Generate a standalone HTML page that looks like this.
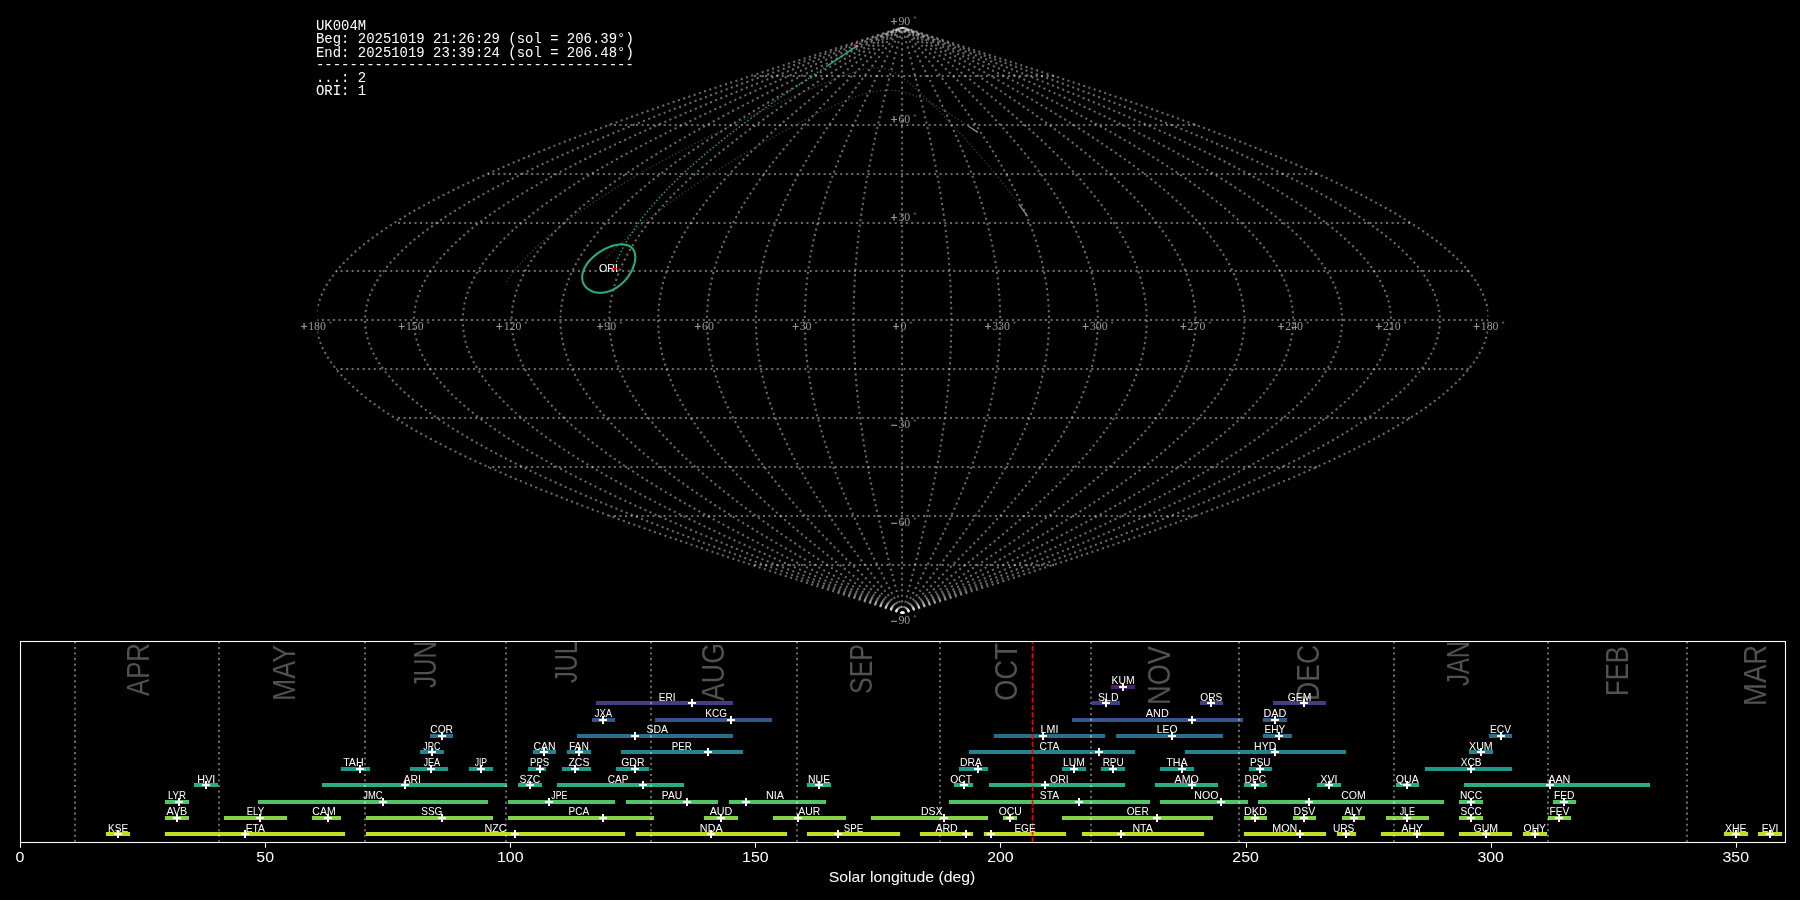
<!DOCTYPE html>
<html lang="en">
<head>
<meta charset="utf-8">
<title>UK004M meteor radiant map</title>
<style>
html,body{margin:0;padding:0;background:#000;}
body{width:1800px;height:900px;overflow:hidden;}
svg{display:block;}
text{font-family:"Liberation Sans",sans-serif;}
.sl{font-family:"Liberation Serif",serif;font-size:11.8px;fill:#999999;}
.pl{stroke:#999;stroke-width:0.45px;}
.ori{font-size:11.3px;fill:#fff;}
.mono{font-family:"Liberation Mono",monospace;font-size:13.89px;fill:#fff;}
.mon{font-size:31px;fill:#525252;}
.lb{font-size:10.2px;fill:#fff;text-anchor:middle;}
.tk{font-size:14.1px;fill:#fff;text-anchor:middle;}
</style>
</head>
<body>
<svg width="1800" height="900" viewBox="0 0 1800 900">
<rect width="1800" height="900" fill="#000"/>
<defs><clipPath id="skyclip"><rect x="317.4" y="27.25" width="1170.9" height="586.3"/></clipPath></defs>
<g opacity="0.999">
<g id="sky" clip-path="url(#skyclip)">
<g fill="none" stroke="#fff" stroke-opacity="0.415" stroke-width="2.08" stroke-dasharray="2.08 3.44">
<path d="M902.45 613.43 L912.68 610.17 L922.91 606.92 L933.13 603.66 L943.35 600.4 L953.55 597.14 L963.73 593.89 L973.9 590.63 L984.04 587.37 L994.16 584.12 L1004.25 580.86 L1014.31 577.6 L1024.34 574.35 L1034.33 571.09 L1044.28 567.83 L1054.19 564.58 L1064.05 561.32 L1073.86 558.06 L1083.61 554.8 L1093.32 551.55 L1102.96 548.29 L1112.55 545.03 L1122.07 541.78 L1131.52 538.52 L1140.9 535.26 L1150.21 532 L1159.45 528.75 L1168.61 525.49 L1177.68 522.23 L1186.67 518.98 L1195.58 515.72 L1204.4 512.46 L1213.12 509.21 L1221.75 505.95 L1230.28 502.69 L1238.71 499.44 L1247.04 496.18 L1255.27 492.92 L1263.39 489.66 L1271.4 486.41 L1279.29 483.15 L1287.07 479.89 L1294.73 476.64 L1302.28 473.38 L1309.7 470.12 L1317 466.87 L1324.17 463.61 L1331.21 460.35 L1338.13 457.09 L1344.91 453.84 L1351.55 450.58 L1358.06 447.32 L1364.43 444.07 L1370.66 440.81 L1376.74 437.55 L1382.69 434.3 L1388.48 431.04 L1394.13 427.78 L1399.63 424.52 L1404.97 421.27 L1410.17 418.01 L1415.2 414.75 L1420.09 411.5 L1424.81 408.24 L1429.38 404.98 L1433.78 401.73 L1438.03 398.47 L1442.11 395.21 L1446.02 391.95 L1449.77 388.7 L1453.35 385.44 L1456.77 382.18 L1460.02 378.93 L1463.09 375.67 L1466 372.41 L1468.73 369.16 L1471.3 365.9 L1473.68 362.64 L1475.9 359.38 L1477.94 356.13 L1479.8 352.87 L1481.49 349.61 L1483 346.36 L1484.34 343.1 L1485.5 339.84 L1486.48 336.59 L1487.28 333.33 L1487.91 330.07 L1488.35 326.81 L1488.62 323.56 L1488.71 320.3 L1488.62 317.04 L1488.35 313.79 L1487.91 310.53 L1487.28 307.27 L1486.48 304.01 L1485.5 300.76 L1484.34 297.5 L1483 294.24 L1481.49 290.99 L1479.8 287.73 L1477.94 284.47 L1475.9 281.22 L1473.68 277.96 L1471.3 274.7 L1468.73 271.44 L1466 268.19 L1463.09 264.93 L1460.02 261.67 L1456.77 258.42 L1453.35 255.16 L1449.77 251.9 L1446.02 248.65 L1442.11 245.39 L1438.03 242.13 L1433.78 238.88 L1429.38 235.62 L1424.81 232.36 L1420.09 229.1 L1415.2 225.85 L1410.17 222.59 L1404.97 219.33 L1399.63 216.08 L1394.13 212.82 L1388.48 209.56 L1382.69 206.31 L1376.74 203.05 L1370.66 199.79 L1364.43 196.53 L1358.06 193.28 L1351.55 190.02 L1344.91 186.76 L1338.13 183.51 L1331.21 180.25 L1324.17 176.99 L1317 173.74 L1309.7 170.48 L1302.28 167.22 L1294.73 163.96 L1287.07 160.71 L1279.29 157.45 L1271.4 154.19 L1263.39 150.94 L1255.27 147.68 L1247.04 144.42 L1238.71 141.16 L1230.28 137.91 L1221.75 134.65 L1213.12 131.39 L1204.4 128.14 L1195.58 124.88 L1186.67 121.62 L1177.68 118.37 L1168.61 115.11 L1159.45 111.85 L1150.21 108.59 L1140.9 105.34 L1131.52 102.08 L1122.07 98.82 L1112.55 95.57 L1102.96 92.31 L1093.32 89.05 L1083.61 85.8 L1073.86 82.54 L1064.05 79.28 L1054.19 76.03 L1044.28 72.77 L1034.33 69.51 L1024.34 66.25 L1014.31 63 L1004.25 59.74 L994.16 56.48 L984.04 53.23 L973.9 49.97 L963.73 46.71 L953.55 43.45 L943.35 40.2 L933.13 36.94 L922.91 33.68 L912.68 30.43 L902.45 27.17"/>
<path d="M902.45 613.43 L911.83 610.17 L921.21 606.92 L930.58 603.66 L939.94 600.4 L949.29 597.14 L958.62 593.89 L967.94 590.63 L977.24 587.37 L986.52 584.12 L995.77 580.86 L1004.99 577.6 L1014.18 574.35 L1023.34 571.09 L1032.46 567.83 L1041.54 564.58 L1050.58 561.32 L1059.57 558.06 L1068.52 554.8 L1077.41 551.55 L1086.25 548.29 L1095.04 545.03 L1103.77 541.78 L1112.43 538.52 L1121.03 535.26 L1129.57 532 L1138.03 528.75 L1146.43 525.49 L1154.75 522.23 L1162.99 518.98 L1171.15 515.72 L1179.23 512.46 L1187.23 509.21 L1195.14 505.95 L1202.96 502.69 L1210.69 499.44 L1218.33 496.18 L1225.87 492.92 L1233.31 489.66 L1240.65 486.41 L1247.89 483.15 L1255.02 479.89 L1262.04 476.64 L1268.96 473.38 L1275.76 470.12 L1282.45 466.87 L1289.03 463.61 L1295.48 460.35 L1301.82 457.09 L1308.03 453.84 L1314.13 450.58 L1320.09 447.32 L1325.93 444.07 L1331.64 440.81 L1337.22 437.55 L1342.67 434.3 L1347.98 431.04 L1353.16 427.78 L1358.2 424.52 L1363.1 421.27 L1367.86 418.01 L1372.48 414.75 L1376.95 411.5 L1381.28 408.24 L1385.47 404.98 L1389.5 401.73 L1393.39 398.47 L1397.13 395.21 L1400.72 391.95 L1404.16 388.7 L1407.45 385.44 L1410.58 382.18 L1413.55 378.93 L1416.37 375.67 L1419.04 372.41 L1421.54 369.16 L1423.89 365.9 L1426.08 362.64 L1428.11 359.38 L1429.98 356.13 L1431.69 352.87 L1433.24 349.61 L1434.63 346.36 L1435.85 343.1 L1436.91 339.84 L1437.81 336.59 L1438.55 333.33 L1439.12 330.07 L1439.53 326.81 L1439.77 323.56 L1439.86 320.3 L1439.77 317.04 L1439.53 313.79 L1439.12 310.53 L1438.55 307.27 L1437.81 304.01 L1436.91 300.76 L1435.85 297.5 L1434.63 294.24 L1433.24 290.99 L1431.69 287.73 L1429.98 284.47 L1428.11 281.22 L1426.08 277.96 L1423.89 274.7 L1421.54 271.44 L1419.04 268.19 L1416.37 264.93 L1413.55 261.67 L1410.58 258.42 L1407.45 255.16 L1404.16 251.9 L1400.72 248.65 L1397.13 245.39 L1393.39 242.13 L1389.5 238.88 L1385.47 235.62 L1381.28 232.36 L1376.95 229.1 L1372.48 225.85 L1367.86 222.59 L1363.1 219.33 L1358.2 216.08 L1353.16 212.82 L1347.98 209.56 L1342.67 206.31 L1337.22 203.05 L1331.64 199.79 L1325.93 196.53 L1320.09 193.28 L1314.13 190.02 L1308.03 186.76 L1301.82 183.51 L1295.48 180.25 L1289.03 176.99 L1282.45 173.74 L1275.76 170.48 L1268.96 167.22 L1262.04 163.96 L1255.02 160.71 L1247.89 157.45 L1240.65 154.19 L1233.31 150.94 L1225.87 147.68 L1218.33 144.42 L1210.69 141.16 L1202.96 137.91 L1195.14 134.65 L1187.23 131.39 L1179.23 128.14 L1171.15 124.88 L1162.99 121.62 L1154.75 118.37 L1146.43 115.11 L1138.03 111.85 L1129.57 108.59 L1121.03 105.34 L1112.43 102.08 L1103.77 98.82 L1095.04 95.57 L1086.25 92.31 L1077.41 89.05 L1068.52 85.8 L1059.57 82.54 L1050.58 79.28 L1041.54 76.03 L1032.46 72.77 L1023.34 69.51 L1014.18 66.25 L1004.99 63 L995.77 59.74 L986.52 56.48 L977.24 53.23 L967.94 49.97 L958.62 46.71 L949.29 43.45 L939.94 40.2 L930.58 36.94 L921.21 33.68 L911.83 30.43 L902.45 27.17"/>
<path d="M902.45 613.43 L910.98 610.17 L919.5 606.92 L928.02 603.66 L936.53 600.4 L945.03 597.14 L953.52 593.89 L961.99 590.63 L970.44 587.37 L978.88 584.12 L987.29 580.86 L995.67 577.6 L1004.03 574.35 L1012.35 571.09 L1020.64 567.83 L1028.9 564.58 L1037.11 561.32 L1045.29 558.06 L1053.42 554.8 L1061.51 551.55 L1069.54 548.29 L1077.53 545.03 L1085.46 541.78 L1093.34 538.52 L1101.16 535.26 L1108.92 532 L1116.62 528.75 L1124.25 525.49 L1131.81 522.23 L1139.3 518.98 L1146.73 515.72 L1154.07 512.46 L1161.34 509.21 L1168.53 505.95 L1175.64 502.69 L1182.67 499.44 L1189.61 496.18 L1196.47 492.92 L1203.23 489.66 L1209.9 486.41 L1216.48 483.15 L1222.97 479.89 L1229.35 476.64 L1235.64 473.38 L1241.83 470.12 L1247.91 466.87 L1253.88 463.61 L1259.75 460.35 L1265.51 457.09 L1271.16 453.84 L1276.7 450.58 L1282.12 447.32 L1287.43 444.07 L1292.62 440.81 L1297.7 437.55 L1302.65 434.3 L1307.48 431.04 L1312.18 427.78 L1316.76 424.52 L1321.22 421.27 L1325.55 418.01 L1329.75 414.75 L1333.81 411.5 L1337.75 408.24 L1341.56 404.98 L1345.23 401.73 L1348.76 398.47 L1352.16 395.21 L1355.43 391.95 L1358.55 388.7 L1361.54 385.44 L1364.38 382.18 L1367.09 378.93 L1369.65 375.67 L1372.07 372.41 L1374.35 369.16 L1376.49 365.9 L1378.48 362.64 L1380.32 359.38 L1382.02 356.13 L1383.58 352.87 L1384.99 349.61 L1386.25 346.36 L1387.36 343.1 L1388.32 339.84 L1389.14 336.59 L1389.81 333.33 L1390.33 330.07 L1390.7 326.81 L1390.93 323.56 L1391 320.3 L1390.93 317.04 L1390.7 313.79 L1390.33 310.53 L1389.81 307.27 L1389.14 304.01 L1388.32 300.76 L1387.36 297.5 L1386.25 294.24 L1384.99 290.99 L1383.58 287.73 L1382.02 284.47 L1380.32 281.22 L1378.48 277.96 L1376.49 274.7 L1374.35 271.44 L1372.07 268.19 L1369.65 264.93 L1367.09 261.67 L1364.38 258.42 L1361.54 255.16 L1358.55 251.9 L1355.43 248.65 L1352.16 245.39 L1348.76 242.13 L1345.23 238.88 L1341.56 235.62 L1337.75 232.36 L1333.81 229.1 L1329.75 225.85 L1325.55 222.59 L1321.22 219.33 L1316.76 216.08 L1312.18 212.82 L1307.48 209.56 L1302.65 206.31 L1297.7 203.05 L1292.62 199.79 L1287.43 196.53 L1282.12 193.28 L1276.7 190.02 L1271.16 186.76 L1265.51 183.51 L1259.75 180.25 L1253.88 176.99 L1247.91 173.74 L1241.83 170.48 L1235.64 167.22 L1229.35 163.96 L1222.97 160.71 L1216.48 157.45 L1209.9 154.19 L1203.23 150.94 L1196.47 147.68 L1189.61 144.42 L1182.67 141.16 L1175.64 137.91 L1168.53 134.65 L1161.34 131.39 L1154.07 128.14 L1146.73 124.88 L1139.3 121.62 L1131.81 118.37 L1124.25 115.11 L1116.62 111.85 L1108.92 108.59 L1101.16 105.34 L1093.34 102.08 L1085.46 98.82 L1077.53 95.57 L1069.54 92.31 L1061.51 89.05 L1053.42 85.8 L1045.29 82.54 L1037.11 79.28 L1028.9 76.03 L1020.64 72.77 L1012.35 69.51 L1004.03 66.25 L995.67 63 L987.29 59.74 L978.88 56.48 L970.44 53.23 L961.99 49.97 L953.52 46.71 L945.03 43.45 L936.53 40.2 L928.02 36.94 L919.5 33.68 L910.98 30.43 L902.45 27.17"/>
<path d="M902.45 613.43 L910.12 610.17 L917.8 606.92 L925.46 603.66 L933.12 600.4 L940.77 597.14 L948.41 593.89 L956.04 590.63 L963.64 587.37 L971.23 584.12 L978.8 580.86 L986.35 577.6 L993.87 574.35 L1001.36 571.09 L1008.82 567.83 L1016.25 564.58 L1023.65 561.32 L1031 558.06 L1038.32 554.8 L1045.6 551.55 L1052.83 548.29 L1060.02 545.03 L1067.16 541.78 L1074.25 538.52 L1081.29 535.26 L1088.27 532 L1095.2 528.75 L1102.07 525.49 L1108.87 522.23 L1115.62 518.98 L1122.3 515.72 L1128.91 512.46 L1135.45 509.21 L1141.93 505.95 L1148.32 502.69 L1154.65 499.44 L1160.9 496.18 L1167.07 492.92 L1173.15 489.66 L1179.16 486.41 L1185.08 483.15 L1190.92 479.89 L1196.66 476.64 L1202.32 473.38 L1207.89 470.12 L1213.36 466.87 L1218.74 463.61 L1224.02 460.35 L1229.21 457.09 L1234.29 453.84 L1239.28 450.58 L1244.16 447.32 L1248.93 444.07 L1253.61 440.81 L1258.17 437.55 L1262.63 434.3 L1266.97 431.04 L1271.21 427.78 L1275.33 424.52 L1279.34 421.27 L1283.24 418.01 L1287.02 414.75 L1290.68 411.5 L1294.22 408.24 L1297.65 404.98 L1300.95 401.73 L1304.13 398.47 L1307.19 395.21 L1310.13 391.95 L1312.94 388.7 L1315.63 385.44 L1318.19 382.18 L1320.62 378.93 L1322.93 375.67 L1325.11 372.41 L1327.16 369.16 L1329.08 365.9 L1330.88 362.64 L1332.54 359.38 L1334.07 356.13 L1335.47 352.87 L1336.73 349.61 L1337.87 346.36 L1338.87 343.1 L1339.74 339.84 L1340.47 336.59 L1341.07 333.33 L1341.54 330.07 L1341.88 326.81 L1342.08 323.56 L1342.14 320.3 L1342.08 317.04 L1341.88 313.79 L1341.54 310.53 L1341.07 307.27 L1340.47 304.01 L1339.74 300.76 L1338.87 297.5 L1337.87 294.24 L1336.73 290.99 L1335.47 287.73 L1334.07 284.47 L1332.54 281.22 L1330.88 277.96 L1329.08 274.7 L1327.16 271.44 L1325.11 268.19 L1322.93 264.93 L1320.62 261.67 L1318.19 258.42 L1315.63 255.16 L1312.94 251.9 L1310.13 248.65 L1307.19 245.39 L1304.13 242.13 L1300.95 238.88 L1297.65 235.62 L1294.22 232.36 L1290.68 229.1 L1287.02 225.85 L1283.24 222.59 L1279.34 219.33 L1275.33 216.08 L1271.21 212.82 L1266.97 209.56 L1262.63 206.31 L1258.17 203.05 L1253.61 199.79 L1248.93 196.53 L1244.16 193.28 L1239.28 190.02 L1234.29 186.76 L1229.21 183.51 L1224.02 180.25 L1218.74 176.99 L1213.36 173.74 L1207.89 170.48 L1202.32 167.22 L1196.66 163.96 L1190.92 160.71 L1185.08 157.45 L1179.16 154.19 L1173.15 150.94 L1167.07 147.68 L1160.9 144.42 L1154.65 141.16 L1148.32 137.91 L1141.93 134.65 L1135.45 131.39 L1128.91 128.14 L1122.3 124.88 L1115.62 121.62 L1108.87 118.37 L1102.07 115.11 L1095.2 111.85 L1088.27 108.59 L1081.29 105.34 L1074.25 102.08 L1067.16 98.82 L1060.02 95.57 L1052.83 92.31 L1045.6 89.05 L1038.32 85.8 L1031 82.54 L1023.65 79.28 L1016.25 76.03 L1008.82 72.77 L1001.36 69.51 L993.87 66.25 L986.35 63 L978.8 59.74 L971.23 56.48 L963.64 53.23 L956.04 49.97 L948.41 46.71 L940.77 43.45 L933.12 40.2 L925.46 36.94 L917.8 33.68 L910.12 30.43 L902.45 27.17"/>
<path d="M902.45 613.43 L909.27 610.17 L916.09 606.92 L922.9 603.66 L929.71 600.4 L936.51 597.14 L943.3 593.89 L950.08 590.63 L956.84 587.37 L963.59 584.12 L970.32 580.86 L977.03 577.6 L983.71 574.35 L990.37 571.09 L997 567.83 L1003.61 564.58 L1010.18 561.32 L1016.72 558.06 L1023.23 554.8 L1029.7 551.55 L1036.13 548.29 L1042.51 545.03 L1048.86 541.78 L1055.16 538.52 L1061.42 535.26 L1067.63 532 L1073.78 528.75 L1079.89 525.49 L1085.94 522.23 L1091.93 518.98 L1097.87 515.72 L1103.75 512.46 L1109.56 509.21 L1115.32 505.95 L1121 502.69 L1126.63 499.44 L1132.18 496.18 L1137.66 492.92 L1143.08 489.66 L1148.41 486.41 L1153.68 483.15 L1158.86 479.89 L1163.97 476.64 L1169 473.38 L1173.95 470.12 L1178.82 466.87 L1183.6 463.61 L1188.29 460.35 L1192.9 457.09 L1197.42 453.84 L1201.85 450.58 L1206.19 447.32 L1210.44 444.07 L1214.59 440.81 L1218.65 437.55 L1222.61 434.3 L1226.47 431.04 L1230.24 427.78 L1233.9 424.52 L1237.47 421.27 L1240.93 418.01 L1244.29 414.75 L1247.54 411.5 L1250.69 408.24 L1253.73 404.98 L1256.67 401.73 L1259.5 398.47 L1262.22 395.21 L1264.83 391.95 L1267.33 388.7 L1269.72 385.44 L1272 382.18 L1274.16 378.93 L1276.21 375.67 L1278.15 372.41 L1279.97 369.16 L1281.68 365.9 L1283.27 362.64 L1284.75 359.38 L1286.11 356.13 L1287.35 352.87 L1288.48 349.61 L1289.49 346.36 L1290.38 343.1 L1291.15 339.84 L1291.8 336.59 L1292.34 333.33 L1292.75 330.07 L1293.05 326.81 L1293.23 323.56 L1293.29 320.3 L1293.23 317.04 L1293.05 313.79 L1292.75 310.53 L1292.34 307.27 L1291.8 304.01 L1291.15 300.76 L1290.38 297.5 L1289.49 294.24 L1288.48 290.99 L1287.35 287.73 L1286.11 284.47 L1284.75 281.22 L1283.27 277.96 L1281.68 274.7 L1279.97 271.44 L1278.15 268.19 L1276.21 264.93 L1274.16 261.67 L1272 258.42 L1269.72 255.16 L1267.33 251.9 L1264.83 248.65 L1262.22 245.39 L1259.5 242.13 L1256.67 238.88 L1253.73 235.62 L1250.69 232.36 L1247.54 229.1 L1244.29 225.85 L1240.93 222.59 L1237.47 219.33 L1233.9 216.08 L1230.24 212.82 L1226.47 209.56 L1222.61 206.31 L1218.65 203.05 L1214.59 199.79 L1210.44 196.53 L1206.19 193.28 L1201.85 190.02 L1197.42 186.76 L1192.9 183.51 L1188.29 180.25 L1183.6 176.99 L1178.82 173.74 L1173.95 170.48 L1169 167.22 L1163.97 163.96 L1158.86 160.71 L1153.68 157.45 L1148.41 154.19 L1143.08 150.94 L1137.66 147.68 L1132.18 144.42 L1126.63 141.16 L1121 137.91 L1115.32 134.65 L1109.56 131.39 L1103.75 128.14 L1097.87 124.88 L1091.93 121.62 L1085.94 118.37 L1079.89 115.11 L1073.78 111.85 L1067.63 108.59 L1061.42 105.34 L1055.16 102.08 L1048.86 98.82 L1042.51 95.57 L1036.13 92.31 L1029.7 89.05 L1023.23 85.8 L1016.72 82.54 L1010.18 79.28 L1003.61 76.03 L997 72.77 L990.37 69.51 L983.71 66.25 L977.03 63 L970.32 59.74 L963.59 56.48 L956.84 53.23 L950.08 49.97 L943.3 46.71 L936.51 43.45 L929.71 40.2 L922.9 36.94 L916.09 33.68 L909.27 30.43 L902.45 27.17"/>
<path d="M902.45 613.43 L908.42 610.17 L914.39 606.92 L920.35 603.66 L926.31 600.4 L932.26 597.14 L938.2 593.89 L944.13 590.63 L950.05 587.37 L955.95 584.12 L961.84 580.86 L967.7 577.6 L973.55 574.35 L979.38 571.09 L985.18 567.83 L990.96 564.58 L996.71 561.32 L1002.44 558.06 L1008.13 554.8 L1013.79 551.55 L1019.42 548.29 L1025.01 545.03 L1030.56 541.78 L1036.07 538.52 L1041.55 535.26 L1046.98 532 L1052.37 528.75 L1057.71 525.49 L1063 522.23 L1068.25 518.98 L1073.44 515.72 L1078.59 512.46 L1083.67 509.21 L1088.71 505.95 L1093.69 502.69 L1098.6 499.44 L1103.46 496.18 L1108.26 492.92 L1113 489.66 L1117.67 486.41 L1122.27 483.15 L1126.81 479.89 L1131.28 476.64 L1135.68 473.38 L1140.01 470.12 L1144.27 466.87 L1148.45 463.61 L1152.56 460.35 L1156.59 457.09 L1160.55 453.84 L1164.43 450.58 L1168.22 447.32 L1171.94 444.07 L1175.57 440.81 L1179.12 437.55 L1182.59 434.3 L1185.97 431.04 L1189.26 427.78 L1192.47 424.52 L1195.59 421.27 L1198.62 418.01 L1201.56 414.75 L1204.4 411.5 L1207.16 408.24 L1209.82 404.98 L1212.39 401.73 L1214.87 398.47 L1217.25 395.21 L1219.53 391.95 L1221.72 388.7 L1223.81 385.44 L1225.8 382.18 L1227.7 378.93 L1229.49 375.67 L1231.19 372.41 L1232.78 369.16 L1234.28 365.9 L1235.67 362.64 L1236.96 359.38 L1238.15 356.13 L1239.24 352.87 L1240.22 349.61 L1241.11 346.36 L1241.89 343.1 L1242.56 339.84 L1243.13 336.59 L1243.6 333.33 L1243.97 330.07 L1244.23 326.81 L1244.38 323.56 L1244.43 320.3 L1244.38 317.04 L1244.23 313.79 L1243.97 310.53 L1243.6 307.27 L1243.13 304.01 L1242.56 300.76 L1241.89 297.5 L1241.11 294.24 L1240.22 290.99 L1239.24 287.73 L1238.15 284.47 L1236.96 281.22 L1235.67 277.96 L1234.28 274.7 L1232.78 271.44 L1231.19 268.19 L1229.49 264.93 L1227.7 261.67 L1225.8 258.42 L1223.81 255.16 L1221.72 251.9 L1219.53 248.65 L1217.25 245.39 L1214.87 242.13 L1212.39 238.88 L1209.82 235.62 L1207.16 232.36 L1204.4 229.1 L1201.56 225.85 L1198.62 222.59 L1195.59 219.33 L1192.47 216.08 L1189.26 212.82 L1185.97 209.56 L1182.59 206.31 L1179.12 203.05 L1175.57 199.79 L1171.94 196.53 L1168.22 193.28 L1164.43 190.02 L1160.55 186.76 L1156.59 183.51 L1152.56 180.25 L1148.45 176.99 L1144.27 173.74 L1140.01 170.48 L1135.68 167.22 L1131.28 163.96 L1126.81 160.71 L1122.27 157.45 L1117.67 154.19 L1113 150.94 L1108.26 147.68 L1103.46 144.42 L1098.6 141.16 L1093.69 137.91 L1088.71 134.65 L1083.67 131.39 L1078.59 128.14 L1073.44 124.88 L1068.25 121.62 L1063 118.37 L1057.71 115.11 L1052.37 111.85 L1046.98 108.59 L1041.55 105.34 L1036.07 102.08 L1030.56 98.82 L1025.01 95.57 L1019.42 92.31 L1013.79 89.05 L1008.13 85.8 L1002.44 82.54 L996.71 79.28 L990.96 76.03 L985.18 72.77 L979.38 69.51 L973.55 66.25 L967.7 63 L961.84 59.74 L955.95 56.48 L950.05 53.23 L944.13 49.97 L938.2 46.71 L932.26 43.45 L926.31 40.2 L920.35 36.94 L914.39 33.68 L908.42 30.43 L902.45 27.17"/>
<path d="M902.45 613.43 L907.57 610.17 L912.68 606.92 L917.79 603.66 L922.9 600.4 L928 597.14 L933.09 593.89 L938.17 590.63 L943.25 587.37 L948.31 584.12 L953.35 580.86 L958.38 577.6 L963.4 574.35 L968.39 571.09 L973.36 567.83 L978.32 564.58 L983.25 561.32 L988.15 558.06 L993.03 554.8 L997.88 551.55 L1002.71 548.29 L1007.5 545.03 L1012.26 541.78 L1016.99 538.52 L1021.68 535.26 L1026.33 532 L1030.95 528.75 L1035.53 525.49 L1040.07 522.23 L1044.56 518.98 L1049.02 515.72 L1053.42 512.46 L1057.79 509.21 L1062.1 505.95 L1066.37 502.69 L1070.58 499.44 L1074.75 496.18 L1078.86 492.92 L1082.92 489.66 L1086.92 486.41 L1090.87 483.15 L1094.76 479.89 L1098.59 476.64 L1102.36 473.38 L1106.08 470.12 L1109.72 466.87 L1113.31 463.61 L1116.83 460.35 L1120.29 457.09 L1123.68 453.84 L1127 450.58 L1130.25 447.32 L1133.44 444.07 L1136.55 440.81 L1139.6 437.55 L1142.57 434.3 L1145.47 431.04 L1148.29 427.78 L1151.04 424.52 L1153.71 421.27 L1156.31 418.01 L1158.83 414.75 L1161.27 411.5 L1163.63 408.24 L1165.91 404.98 L1168.12 401.73 L1170.24 398.47 L1172.28 395.21 L1174.24 391.95 L1176.11 388.7 L1177.9 385.44 L1179.61 382.18 L1181.23 378.93 L1182.77 375.67 L1184.22 372.41 L1185.59 369.16 L1186.87 365.9 L1188.07 362.64 L1189.17 359.38 L1190.19 356.13 L1191.13 352.87 L1191.97 349.61 L1192.73 346.36 L1193.4 343.1 L1193.97 339.84 L1194.46 336.59 L1194.87 333.33 L1195.18 330.07 L1195.4 326.81 L1195.54 323.56 L1195.58 320.3 L1195.54 317.04 L1195.4 313.79 L1195.18 310.53 L1194.87 307.27 L1194.46 304.01 L1193.97 300.76 L1193.4 297.5 L1192.73 294.24 L1191.97 290.99 L1191.13 287.73 L1190.19 284.47 L1189.17 281.22 L1188.07 277.96 L1186.87 274.7 L1185.59 271.44 L1184.22 268.19 L1182.77 264.93 L1181.23 261.67 L1179.61 258.42 L1177.9 255.16 L1176.11 251.9 L1174.24 248.65 L1172.28 245.39 L1170.24 242.13 L1168.12 238.88 L1165.91 235.62 L1163.63 232.36 L1161.27 229.1 L1158.83 225.85 L1156.31 222.59 L1153.71 219.33 L1151.04 216.08 L1148.29 212.82 L1145.47 209.56 L1142.57 206.31 L1139.6 203.05 L1136.55 199.79 L1133.44 196.53 L1130.25 193.28 L1127 190.02 L1123.68 186.76 L1120.29 183.51 L1116.83 180.25 L1113.31 176.99 L1109.72 173.74 L1106.08 170.48 L1102.36 167.22 L1098.59 163.96 L1094.76 160.71 L1090.87 157.45 L1086.92 154.19 L1082.92 150.94 L1078.86 147.68 L1074.75 144.42 L1070.58 141.16 L1066.37 137.91 L1062.1 134.65 L1057.79 131.39 L1053.42 128.14 L1049.02 124.88 L1044.56 121.62 L1040.07 118.37 L1035.53 115.11 L1030.95 111.85 L1026.33 108.59 L1021.68 105.34 L1016.99 102.08 L1012.26 98.82 L1007.5 95.57 L1002.71 92.31 L997.88 89.05 L993.03 85.8 L988.15 82.54 L983.25 79.28 L978.32 76.03 L973.36 72.77 L968.39 69.51 L963.4 66.25 L958.38 63 L953.35 59.74 L948.31 56.48 L943.25 53.23 L938.17 49.97 L933.09 46.71 L928 43.45 L922.9 40.2 L917.79 36.94 L912.68 33.68 L907.57 30.43 L902.45 27.17"/>
<path d="M902.45 613.43 L906.71 610.17 L910.98 606.92 L915.23 603.66 L919.49 600.4 L923.74 597.14 L927.98 593.89 L932.22 590.63 L936.45 587.37 L940.66 584.12 L944.87 580.86 L949.06 577.6 L953.24 574.35 L957.4 571.09 L961.55 567.83 L965.67 564.58 L969.78 561.32 L973.87 558.06 L977.94 554.8 L981.98 551.55 L986 548.29 L989.99 545.03 L993.96 541.78 L997.9 538.52 L1001.81 535.26 L1005.69 532 L1009.53 528.75 L1013.35 525.49 L1017.13 522.23 L1020.88 518.98 L1024.59 515.72 L1028.26 512.46 L1031.9 509.21 L1035.49 505.95 L1039.05 502.69 L1042.56 499.44 L1046.03 496.18 L1049.46 492.92 L1052.84 489.66 L1056.18 486.41 L1059.47 483.15 L1062.71 479.89 L1065.9 476.64 L1069.05 473.38 L1072.14 470.12 L1075.18 466.87 L1078.17 463.61 L1081.1 460.35 L1083.98 457.09 L1086.81 453.84 L1089.58 450.58 L1092.29 447.32 L1094.94 444.07 L1097.54 440.81 L1100.07 437.55 L1102.55 434.3 L1104.96 431.04 L1107.32 427.78 L1109.61 424.52 L1111.83 421.27 L1114 418.01 L1116.1 414.75 L1118.13 411.5 L1120.1 408.24 L1122 404.98 L1123.84 401.73 L1125.61 398.47 L1127.31 395.21 L1128.94 391.95 L1130.5 388.7 L1131.99 385.44 L1133.42 382.18 L1134.77 378.93 L1136.05 375.67 L1137.26 372.41 L1138.4 369.16 L1139.47 365.9 L1140.46 362.64 L1141.39 359.38 L1142.24 356.13 L1143.01 352.87 L1143.72 349.61 L1144.35 346.36 L1144.9 343.1 L1145.39 339.84 L1145.8 336.59 L1146.13 333.33 L1146.39 330.07 L1146.58 326.81 L1146.69 323.56 L1146.73 320.3 L1146.69 317.04 L1146.58 313.79 L1146.39 310.53 L1146.13 307.27 L1145.8 304.01 L1145.39 300.76 L1144.9 297.5 L1144.35 294.24 L1143.72 290.99 L1143.01 287.73 L1142.24 284.47 L1141.39 281.22 L1140.46 277.96 L1139.47 274.7 L1138.4 271.44 L1137.26 268.19 L1136.05 264.93 L1134.77 261.67 L1133.42 258.42 L1131.99 255.16 L1130.5 251.9 L1128.94 248.65 L1127.31 245.39 L1125.61 242.13 L1123.84 238.88 L1122 235.62 L1120.1 232.36 L1118.13 229.1 L1116.1 225.85 L1114 222.59 L1111.83 219.33 L1109.61 216.08 L1107.32 212.82 L1104.96 209.56 L1102.55 206.31 L1100.07 203.05 L1097.54 199.79 L1094.94 196.53 L1092.29 193.28 L1089.58 190.02 L1086.81 186.76 L1083.98 183.51 L1081.1 180.25 L1078.17 176.99 L1075.18 173.74 L1072.14 170.48 L1069.05 167.22 L1065.9 163.96 L1062.71 160.71 L1059.47 157.45 L1056.18 154.19 L1052.84 150.94 L1049.46 147.68 L1046.03 144.42 L1042.56 141.16 L1039.05 137.91 L1035.49 134.65 L1031.9 131.39 L1028.26 128.14 L1024.59 124.88 L1020.88 121.62 L1017.13 118.37 L1013.35 115.11 L1009.53 111.85 L1005.69 108.59 L1001.81 105.34 L997.9 102.08 L993.96 98.82 L989.99 95.57 L986 92.31 L981.98 89.05 L977.94 85.8 L973.87 82.54 L969.78 79.28 L965.67 76.03 L961.55 72.77 L957.4 69.51 L953.24 66.25 L949.06 63 L944.87 59.74 L940.66 56.48 L936.45 53.23 L932.22 49.97 L927.98 46.71 L923.74 43.45 L919.49 40.2 L915.23 36.94 L910.98 33.68 L906.71 30.43 L902.45 27.17"/>
<path d="M902.45 613.43 L905.86 610.17 L909.27 606.92 L912.68 603.66 L916.08 600.4 L919.48 597.14 L922.88 593.89 L926.27 590.63 L929.65 587.37 L933.02 584.12 L936.38 580.86 L939.74 577.6 L943.08 574.35 L946.41 571.09 L949.73 567.83 L953.03 564.58 L956.32 561.32 L959.59 558.06 L962.84 554.8 L966.07 551.55 L969.29 548.29 L972.48 545.03 L975.66 541.78 L978.81 538.52 L981.93 535.26 L985.04 532 L988.12 528.75 L991.17 525.49 L994.19 522.23 L997.19 518.98 L1000.16 515.72 L1003.1 512.46 L1006.01 509.21 L1008.88 505.95 L1011.73 502.69 L1014.54 499.44 L1017.31 496.18 L1020.06 492.92 L1022.76 489.66 L1025.43 486.41 L1028.06 483.15 L1030.66 479.89 L1033.21 476.64 L1035.73 473.38 L1038.2 470.12 L1040.63 466.87 L1043.02 463.61 L1045.37 460.35 L1047.68 457.09 L1049.94 453.84 L1052.15 450.58 L1054.32 447.32 L1056.44 444.07 L1058.52 440.81 L1060.55 437.55 L1062.53 434.3 L1064.46 431.04 L1066.34 427.78 L1068.18 424.52 L1069.96 421.27 L1071.69 418.01 L1073.37 414.75 L1075 411.5 L1076.57 408.24 L1078.09 404.98 L1079.56 401.73 L1080.98 398.47 L1082.34 395.21 L1083.64 391.95 L1084.89 388.7 L1086.08 385.44 L1087.22 382.18 L1088.31 378.93 L1089.33 375.67 L1090.3 372.41 L1091.21 369.16 L1092.07 365.9 L1092.86 362.64 L1093.6 359.38 L1094.28 356.13 L1094.9 352.87 L1095.46 349.61 L1095.97 346.36 L1096.41 343.1 L1096.8 339.84 L1097.13 336.59 L1097.39 333.33 L1097.6 330.07 L1097.75 326.81 L1097.84 323.56 L1097.87 320.3 L1097.84 317.04 L1097.75 313.79 L1097.6 310.53 L1097.39 307.27 L1097.13 304.01 L1096.8 300.76 L1096.41 297.5 L1095.97 294.24 L1095.46 290.99 L1094.9 287.73 L1094.28 284.47 L1093.6 281.22 L1092.86 277.96 L1092.07 274.7 L1091.21 271.44 L1090.3 268.19 L1089.33 264.93 L1088.31 261.67 L1087.22 258.42 L1086.08 255.16 L1084.89 251.9 L1083.64 248.65 L1082.34 245.39 L1080.98 242.13 L1079.56 238.88 L1078.09 235.62 L1076.57 232.36 L1075 229.1 L1073.37 225.85 L1071.69 222.59 L1069.96 219.33 L1068.18 216.08 L1066.34 212.82 L1064.46 209.56 L1062.53 206.31 L1060.55 203.05 L1058.52 199.79 L1056.44 196.53 L1054.32 193.28 L1052.15 190.02 L1049.94 186.76 L1047.68 183.51 L1045.37 180.25 L1043.02 176.99 L1040.63 173.74 L1038.2 170.48 L1035.73 167.22 L1033.21 163.96 L1030.66 160.71 L1028.06 157.45 L1025.43 154.19 L1022.76 150.94 L1020.06 147.68 L1017.31 144.42 L1014.54 141.16 L1011.73 137.91 L1008.88 134.65 L1006.01 131.39 L1003.1 128.14 L1000.16 124.88 L997.19 121.62 L994.19 118.37 L991.17 115.11 L988.12 111.85 L985.04 108.59 L981.93 105.34 L978.81 102.08 L975.66 98.82 L972.48 95.57 L969.29 92.31 L966.07 89.05 L962.84 85.8 L959.59 82.54 L956.32 79.28 L953.03 76.03 L949.73 72.77 L946.41 69.51 L943.08 66.25 L939.74 63 L936.38 59.74 L933.02 56.48 L929.65 53.23 L926.27 49.97 L922.88 46.71 L919.48 43.45 L916.08 40.2 L912.68 36.94 L909.27 33.68 L905.86 30.43 L902.45 27.17"/>
<path d="M902.45 613.43 L905.01 610.17 L907.57 606.92 L910.12 603.66 L912.67 600.4 L915.22 597.14 L917.77 593.89 L920.31 590.63 L922.85 587.37 L925.38 584.12 L927.9 580.86 L930.42 577.6 L932.92 574.35 L935.42 571.09 L937.91 567.83 L940.38 564.58 L942.85 561.32 L945.3 558.06 L947.74 554.8 L950.17 551.55 L952.58 548.29 L954.97 545.03 L957.35 541.78 L959.72 538.52 L962.06 535.26 L964.39 532 L966.7 528.75 L968.99 525.49 L971.26 522.23 L973.51 518.98 L975.73 515.72 L977.94 512.46 L980.12 509.21 L982.28 505.95 L984.41 502.69 L986.52 499.44 L988.6 496.18 L990.66 492.92 L992.68 489.66 L994.69 486.41 L996.66 483.15 L998.61 479.89 L1000.52 476.64 L1002.41 473.38 L1004.26 470.12 L1006.09 466.87 L1007.88 463.61 L1009.64 460.35 L1011.37 457.09 L1013.06 453.84 L1014.73 450.58 L1016.35 447.32 L1017.94 444.07 L1019.5 440.81 L1021.02 437.55 L1022.51 434.3 L1023.96 431.04 L1025.37 427.78 L1026.74 424.52 L1028.08 421.27 L1029.38 418.01 L1030.64 414.75 L1031.86 411.5 L1033.04 408.24 L1034.18 404.98 L1035.28 401.73 L1036.34 398.47 L1037.36 395.21 L1038.34 391.95 L1039.28 388.7 L1040.18 385.44 L1041.03 382.18 L1041.84 378.93 L1042.61 375.67 L1043.34 372.41 L1044.02 369.16 L1044.66 365.9 L1045.26 362.64 L1045.81 359.38 L1046.32 356.13 L1046.79 352.87 L1047.21 349.61 L1047.59 346.36 L1047.92 343.1 L1048.21 339.84 L1048.46 336.59 L1048.66 333.33 L1048.81 330.07 L1048.93 326.81 L1048.99 323.56 L1049.02 320.3 L1048.99 317.04 L1048.93 313.79 L1048.81 310.53 L1048.66 307.27 L1048.46 304.01 L1048.21 300.76 L1047.92 297.5 L1047.59 294.24 L1047.21 290.99 L1046.79 287.73 L1046.32 284.47 L1045.81 281.22 L1045.26 277.96 L1044.66 274.7 L1044.02 271.44 L1043.34 268.19 L1042.61 264.93 L1041.84 261.67 L1041.03 258.42 L1040.18 255.16 L1039.28 251.9 L1038.34 248.65 L1037.36 245.39 L1036.34 242.13 L1035.28 238.88 L1034.18 235.62 L1033.04 232.36 L1031.86 229.1 L1030.64 225.85 L1029.38 222.59 L1028.08 219.33 L1026.74 216.08 L1025.37 212.82 L1023.96 209.56 L1022.51 206.31 L1021.02 203.05 L1019.5 199.79 L1017.94 196.53 L1016.35 193.28 L1014.73 190.02 L1013.06 186.76 L1011.37 183.51 L1009.64 180.25 L1007.88 176.99 L1006.09 173.74 L1004.26 170.48 L1002.41 167.22 L1000.52 163.96 L998.61 160.71 L996.66 157.45 L994.69 154.19 L992.68 150.94 L990.66 147.68 L988.6 144.42 L986.52 141.16 L984.41 137.91 L982.28 134.65 L980.12 131.39 L977.94 128.14 L975.73 124.88 L973.51 121.62 L971.26 118.37 L968.99 115.11 L966.7 111.85 L964.39 108.59 L962.06 105.34 L959.72 102.08 L957.35 98.82 L954.97 95.57 L952.58 92.31 L950.17 89.05 L947.74 85.8 L945.3 82.54 L942.85 79.28 L940.38 76.03 L937.91 72.77 L935.42 69.51 L932.92 66.25 L930.42 63 L927.9 59.74 L925.38 56.48 L922.85 53.23 L920.31 49.97 L917.77 46.71 L915.22 43.45 L912.67 40.2 L910.12 36.94 L907.57 33.68 L905.01 30.43 L902.45 27.17"/>
<path d="M902.45 613.43 L904.16 610.17 L905.86 606.92 L907.56 603.66 L909.27 600.4 L910.97 597.14 L912.66 593.89 L914.36 590.63 L916.05 587.37 L917.74 584.12 L919.42 580.86 L921.09 577.6 L922.77 574.35 L924.43 571.09 L926.09 567.83 L927.74 564.58 L929.38 561.32 L931.02 558.06 L932.64 554.8 L934.26 551.55 L935.87 548.29 L937.47 545.03 L939.05 541.78 L940.63 538.52 L942.19 535.26 L943.74 532 L945.28 528.75 L946.81 525.49 L948.32 522.23 L949.82 518.98 L951.31 515.72 L952.77 512.46 L954.23 509.21 L955.67 505.95 L957.09 502.69 L958.49 499.44 L959.88 496.18 L961.25 492.92 L962.61 489.66 L963.94 486.41 L965.26 483.15 L966.55 479.89 L967.83 476.64 L969.09 473.38 L970.33 470.12 L971.54 466.87 L972.74 463.61 L973.91 460.35 L975.06 457.09 L976.19 453.84 L977.3 450.58 L978.38 447.32 L979.45 444.07 L980.48 440.81 L981.5 437.55 L982.49 434.3 L983.46 431.04 L984.4 427.78 L985.31 424.52 L986.2 421.27 L987.07 418.01 L987.91 414.75 L988.72 411.5 L989.51 408.24 L990.27 404.98 L991.01 401.73 L991.71 398.47 L992.39 395.21 L993.05 391.95 L993.67 388.7 L994.27 385.44 L994.84 382.18 L995.38 378.93 L995.89 375.67 L996.37 372.41 L996.83 369.16 L997.26 365.9 L997.66 362.64 L998.02 359.38 L998.36 356.13 L998.68 352.87 L998.96 349.61 L999.21 346.36 L999.43 343.1 L999.62 339.84 L999.79 336.59 L999.92 333.33 L1000.03 330.07 L1000.1 326.81 L1000.15 323.56 L1000.16 320.3 L1000.15 317.04 L1000.1 313.79 L1000.03 310.53 L999.92 307.27 L999.79 304.01 L999.62 300.76 L999.43 297.5 L999.21 294.24 L998.96 290.99 L998.68 287.73 L998.36 284.47 L998.02 281.22 L997.66 277.96 L997.26 274.7 L996.83 271.44 L996.37 268.19 L995.89 264.93 L995.38 261.67 L994.84 258.42 L994.27 255.16 L993.67 251.9 L993.05 248.65 L992.39 245.39 L991.71 242.13 L991.01 238.88 L990.27 235.62 L989.51 232.36 L988.72 229.1 L987.91 225.85 L987.07 222.59 L986.2 219.33 L985.31 216.08 L984.4 212.82 L983.46 209.56 L982.49 206.31 L981.5 203.05 L980.48 199.79 L979.45 196.53 L978.38 193.28 L977.3 190.02 L976.19 186.76 L975.06 183.51 L973.91 180.25 L972.74 176.99 L971.54 173.74 L970.33 170.48 L969.09 167.22 L967.83 163.96 L966.55 160.71 L965.26 157.45 L963.94 154.19 L962.61 150.94 L961.25 147.68 L959.88 144.42 L958.49 141.16 L957.09 137.91 L955.67 134.65 L954.23 131.39 L952.77 128.14 L951.31 124.88 L949.82 121.62 L948.32 118.37 L946.81 115.11 L945.28 111.85 L943.74 108.59 L942.19 105.34 L940.63 102.08 L939.05 98.82 L937.47 95.57 L935.87 92.31 L934.26 89.05 L932.64 85.8 L931.02 82.54 L929.38 79.28 L927.74 76.03 L926.09 72.77 L924.43 69.51 L922.77 66.25 L921.09 63 L919.42 59.74 L917.74 56.48 L916.05 53.23 L914.36 49.97 L912.66 46.71 L910.97 43.45 L909.27 40.2 L907.56 36.94 L905.86 33.68 L904.16 30.43 L902.45 27.17"/>
<path d="M902.45 613.43 L903.3 610.17 L904.16 606.92 L905.01 603.66 L905.86 600.4 L906.71 597.14 L907.56 593.89 L908.4 590.63 L909.25 587.37 L910.09 584.12 L910.93 580.86 L911.77 577.6 L912.61 574.35 L913.44 571.09 L914.27 567.83 L915.09 564.58 L915.92 561.32 L916.73 558.06 L917.55 554.8 L918.36 551.55 L919.16 548.29 L919.96 545.03 L920.75 541.78 L921.54 538.52 L922.32 535.26 L923.1 532 L923.87 528.75 L924.63 525.49 L925.39 522.23 L926.14 518.98 L926.88 515.72 L927.61 512.46 L928.34 509.21 L929.06 505.95 L929.77 502.69 L930.47 499.44 L931.17 496.18 L931.85 492.92 L932.53 489.66 L933.2 486.41 L933.85 483.15 L934.5 479.89 L935.14 476.64 L935.77 473.38 L936.39 470.12 L937 466.87 L937.59 463.61 L938.18 460.35 L938.76 457.09 L939.32 453.84 L939.88 450.58 L940.42 447.32 L940.95 444.07 L941.47 440.81 L941.97 437.55 L942.47 434.3 L942.95 431.04 L943.42 427.78 L943.88 424.52 L944.33 421.27 L944.76 418.01 L945.18 414.75 L945.59 411.5 L945.98 408.24 L946.36 404.98 L946.73 401.73 L947.08 398.47 L947.42 395.21 L947.75 391.95 L948.06 388.7 L948.36 385.44 L948.64 382.18 L948.91 378.93 L949.17 375.67 L949.41 372.41 L949.64 369.16 L949.85 365.9 L950.05 362.64 L950.24 359.38 L950.41 356.13 L950.56 352.87 L950.7 349.61 L950.83 346.36 L950.94 343.1 L951.04 339.84 L951.12 336.59 L951.19 333.33 L951.24 330.07 L951.28 326.81 L951.3 323.56 L951.31 320.3 L951.3 317.04 L951.28 313.79 L951.24 310.53 L951.19 307.27 L951.12 304.01 L951.04 300.76 L950.94 297.5 L950.83 294.24 L950.7 290.99 L950.56 287.73 L950.41 284.47 L950.24 281.22 L950.05 277.96 L949.85 274.7 L949.64 271.44 L949.41 268.19 L949.17 264.93 L948.91 261.67 L948.64 258.42 L948.36 255.16 L948.06 251.9 L947.75 248.65 L947.42 245.39 L947.08 242.13 L946.73 238.88 L946.36 235.62 L945.98 232.36 L945.59 229.1 L945.18 225.85 L944.76 222.59 L944.33 219.33 L943.88 216.08 L943.42 212.82 L942.95 209.56 L942.47 206.31 L941.97 203.05 L941.47 199.79 L940.95 196.53 L940.42 193.28 L939.88 190.02 L939.32 186.76 L938.76 183.51 L938.18 180.25 L937.59 176.99 L937 173.74 L936.39 170.48 L935.77 167.22 L935.14 163.96 L934.5 160.71 L933.85 157.45 L933.2 154.19 L932.53 150.94 L931.85 147.68 L931.17 144.42 L930.47 141.16 L929.77 137.91 L929.06 134.65 L928.34 131.39 L927.61 128.14 L926.88 124.88 L926.14 121.62 L925.39 118.37 L924.63 115.11 L923.87 111.85 L923.1 108.59 L922.32 105.34 L921.54 102.08 L920.75 98.82 L919.96 95.57 L919.16 92.31 L918.36 89.05 L917.55 85.8 L916.73 82.54 L915.92 79.28 L915.09 76.03 L914.27 72.77 L913.44 69.51 L912.61 66.25 L911.77 63 L910.93 59.74 L910.09 56.48 L909.25 53.23 L908.4 49.97 L907.56 46.71 L906.71 43.45 L905.86 40.2 L905.01 36.94 L904.16 33.68 L903.3 30.43 L902.45 27.17"/>
<path d="M902 613.43 L902 27.17"/>
<path d="M902.45 613.43 L901.6 610.17 L900.74 606.92 L899.89 603.66 L899.04 600.4 L898.19 597.14 L897.34 593.89 L896.5 590.63 L895.65 587.37 L894.81 584.12 L893.97 580.86 L893.13 577.6 L892.29 574.35 L891.46 571.09 L890.63 567.83 L889.81 564.58 L888.98 561.32 L888.17 558.06 L887.35 554.8 L886.54 551.55 L885.74 548.29 L884.94 545.03 L884.15 541.78 L883.36 538.52 L882.58 535.26 L881.8 532 L881.03 528.75 L880.27 525.49 L879.51 522.23 L878.76 518.98 L878.02 515.72 L877.29 512.46 L876.56 509.21 L875.84 505.95 L875.13 502.69 L874.43 499.44 L873.73 496.18 L873.05 492.92 L872.37 489.66 L871.7 486.41 L871.05 483.15 L870.4 479.89 L869.76 476.64 L869.13 473.38 L868.51 470.12 L867.9 466.87 L867.31 463.61 L866.72 460.35 L866.14 457.09 L865.58 453.84 L865.02 450.58 L864.48 447.32 L863.95 444.07 L863.43 440.81 L862.93 437.55 L862.43 434.3 L861.95 431.04 L861.48 427.78 L861.02 424.52 L860.57 421.27 L860.14 418.01 L859.72 414.75 L859.31 411.5 L858.92 408.24 L858.54 404.98 L858.17 401.73 L857.82 398.47 L857.48 395.21 L857.15 391.95 L856.84 388.7 L856.54 385.44 L856.26 382.18 L855.99 378.93 L855.73 375.67 L855.49 372.41 L855.26 369.16 L855.05 365.9 L854.85 362.64 L854.66 359.38 L854.49 356.13 L854.34 352.87 L854.2 349.61 L854.07 346.36 L853.96 343.1 L853.86 339.84 L853.78 336.59 L853.71 333.33 L853.66 330.07 L853.62 326.81 L853.6 323.56 L853.6 320.3 L853.6 317.04 L853.62 313.79 L853.66 310.53 L853.71 307.27 L853.78 304.01 L853.86 300.76 L853.96 297.5 L854.07 294.24 L854.2 290.99 L854.34 287.73 L854.49 284.47 L854.66 281.22 L854.85 277.96 L855.05 274.7 L855.26 271.44 L855.49 268.19 L855.73 264.93 L855.99 261.67 L856.26 258.42 L856.54 255.16 L856.84 251.9 L857.15 248.65 L857.48 245.39 L857.82 242.13 L858.17 238.88 L858.54 235.62 L858.92 232.36 L859.31 229.1 L859.72 225.85 L860.14 222.59 L860.57 219.33 L861.02 216.08 L861.48 212.82 L861.95 209.56 L862.43 206.31 L862.93 203.05 L863.43 199.79 L863.95 196.53 L864.48 193.28 L865.02 190.02 L865.58 186.76 L866.14 183.51 L866.72 180.25 L867.31 176.99 L867.9 173.74 L868.51 170.48 L869.13 167.22 L869.76 163.96 L870.4 160.71 L871.05 157.45 L871.7 154.19 L872.37 150.94 L873.05 147.68 L873.73 144.42 L874.43 141.16 L875.13 137.91 L875.84 134.65 L876.56 131.39 L877.29 128.14 L878.02 124.88 L878.76 121.62 L879.51 118.37 L880.27 115.11 L881.03 111.85 L881.8 108.59 L882.58 105.34 L883.36 102.08 L884.15 98.82 L884.94 95.57 L885.74 92.31 L886.54 89.05 L887.35 85.8 L888.17 82.54 L888.98 79.28 L889.81 76.03 L890.63 72.77 L891.46 69.51 L892.29 66.25 L893.13 63 L893.97 59.74 L894.81 56.48 L895.65 53.23 L896.5 49.97 L897.34 46.71 L898.19 43.45 L899.04 40.2 L899.89 36.94 L900.74 33.68 L901.6 30.43 L902.45 27.17"/>
<path d="M902.45 613.43 L900.74 610.17 L899.04 606.92 L897.34 603.66 L895.63 600.4 L893.93 597.14 L892.24 593.89 L890.54 590.63 L888.85 587.37 L887.16 584.12 L885.48 580.86 L883.81 577.6 L882.13 574.35 L880.47 571.09 L878.81 567.83 L877.16 564.58 L875.52 561.32 L873.88 558.06 L872.26 554.8 L870.64 551.55 L869.03 548.29 L867.43 545.03 L865.85 541.78 L864.27 538.52 L862.71 535.26 L861.16 532 L859.62 528.75 L858.09 525.49 L856.58 522.23 L855.08 518.98 L853.6 515.72 L852.13 512.46 L850.67 509.21 L849.23 505.95 L847.81 502.69 L846.41 499.44 L845.02 496.18 L843.65 492.92 L842.29 489.66 L840.96 486.41 L839.64 483.15 L838.35 479.89 L837.07 476.64 L835.81 473.38 L834.57 470.12 L833.36 466.87 L832.16 463.61 L830.99 460.35 L829.84 457.09 L828.71 453.84 L827.6 450.58 L826.52 447.32 L825.45 444.07 L824.42 440.81 L823.4 437.55 L822.41 434.3 L821.44 431.04 L820.5 427.78 L819.59 424.52 L818.7 421.27 L817.83 418.01 L816.99 414.75 L816.18 411.5 L815.39 408.24 L814.63 404.98 L813.89 401.73 L813.19 398.47 L812.51 395.21 L811.85 391.95 L811.23 388.7 L810.63 385.44 L810.06 382.18 L809.52 378.93 L809.01 375.67 L808.53 372.41 L808.07 369.16 L807.64 365.9 L807.24 362.64 L806.88 359.38 L806.54 356.13 L806.22 352.87 L805.94 349.61 L805.69 346.36 L805.47 343.1 L805.28 339.84 L805.11 336.59 L804.98 333.33 L804.87 330.07 L804.8 326.81 L804.75 323.56 L804.74 320.3 L804.75 317.04 L804.8 313.79 L804.87 310.53 L804.98 307.27 L805.11 304.01 L805.28 300.76 L805.47 297.5 L805.69 294.24 L805.94 290.99 L806.22 287.73 L806.54 284.47 L806.88 281.22 L807.24 277.96 L807.64 274.7 L808.07 271.44 L808.53 268.19 L809.01 264.93 L809.52 261.67 L810.06 258.42 L810.63 255.16 L811.23 251.9 L811.85 248.65 L812.51 245.39 L813.19 242.13 L813.89 238.88 L814.63 235.62 L815.39 232.36 L816.18 229.1 L816.99 225.85 L817.83 222.59 L818.7 219.33 L819.59 216.08 L820.5 212.82 L821.44 209.56 L822.41 206.31 L823.4 203.05 L824.42 199.79 L825.45 196.53 L826.52 193.28 L827.6 190.02 L828.71 186.76 L829.84 183.51 L830.99 180.25 L832.16 176.99 L833.36 173.74 L834.57 170.48 L835.81 167.22 L837.07 163.96 L838.35 160.71 L839.64 157.45 L840.96 154.19 L842.29 150.94 L843.65 147.68 L845.02 144.42 L846.41 141.16 L847.81 137.91 L849.23 134.65 L850.67 131.39 L852.13 128.14 L853.6 124.88 L855.08 121.62 L856.58 118.37 L858.09 115.11 L859.62 111.85 L861.16 108.59 L862.71 105.34 L864.27 102.08 L865.85 98.82 L867.43 95.57 L869.03 92.31 L870.64 89.05 L872.26 85.8 L873.88 82.54 L875.52 79.28 L877.16 76.03 L878.81 72.77 L880.47 69.51 L882.13 66.25 L883.81 63 L885.48 59.74 L887.16 56.48 L888.85 53.23 L890.54 49.97 L892.24 46.71 L893.93 43.45 L895.63 40.2 L897.34 36.94 L899.04 33.68 L900.74 30.43 L902.45 27.17"/>
<path d="M902.45 613.43 L899.89 610.17 L897.33 606.92 L894.78 603.66 L892.23 600.4 L889.68 597.14 L887.13 593.89 L884.59 590.63 L882.05 587.37 L879.52 584.12 L877 580.86 L874.48 577.6 L871.98 574.35 L869.48 571.09 L866.99 567.83 L864.52 564.58 L862.05 561.32 L859.6 558.06 L857.16 554.8 L854.73 551.55 L852.32 548.29 L849.93 545.03 L847.55 541.78 L845.18 538.52 L842.84 535.26 L840.51 532 L838.2 528.75 L835.91 525.49 L833.64 522.23 L831.39 518.98 L829.17 515.72 L826.96 512.46 L824.78 509.21 L822.62 505.95 L820.49 502.69 L818.38 499.44 L816.3 496.18 L814.24 492.92 L812.22 489.66 L810.21 486.41 L808.24 483.15 L806.29 479.89 L804.38 476.64 L802.49 473.38 L800.64 470.12 L798.81 466.87 L797.02 463.61 L795.26 460.35 L793.53 457.09 L791.84 453.84 L790.17 450.58 L788.55 447.32 L786.96 444.07 L785.4 440.81 L783.88 437.55 L782.39 434.3 L780.94 431.04 L779.53 427.78 L778.16 424.52 L776.82 421.27 L775.52 418.01 L774.26 414.75 L773.04 411.5 L771.86 408.24 L770.72 404.98 L769.62 401.73 L768.56 398.47 L767.54 395.21 L766.56 391.95 L765.62 388.7 L764.72 385.44 L763.87 382.18 L763.06 378.93 L762.29 375.67 L761.56 372.41 L760.88 369.16 L760.24 365.9 L759.64 362.64 L759.09 359.38 L758.58 356.13 L758.11 352.87 L757.69 349.61 L757.31 346.36 L756.98 343.1 L756.69 339.84 L756.44 336.59 L756.24 333.33 L756.09 330.07 L755.97 326.81 L755.91 323.56 L755.88 320.3 L755.91 317.04 L755.97 313.79 L756.09 310.53 L756.24 307.27 L756.44 304.01 L756.69 300.76 L756.98 297.5 L757.31 294.24 L757.69 290.99 L758.11 287.73 L758.58 284.47 L759.09 281.22 L759.64 277.96 L760.24 274.7 L760.88 271.44 L761.56 268.19 L762.29 264.93 L763.06 261.67 L763.87 258.42 L764.72 255.16 L765.62 251.9 L766.56 248.65 L767.54 245.39 L768.56 242.13 L769.62 238.88 L770.72 235.62 L771.86 232.36 L773.04 229.1 L774.26 225.85 L775.52 222.59 L776.82 219.33 L778.16 216.08 L779.53 212.82 L780.94 209.56 L782.39 206.31 L783.88 203.05 L785.4 199.79 L786.96 196.53 L788.55 193.28 L790.17 190.02 L791.84 186.76 L793.53 183.51 L795.26 180.25 L797.02 176.99 L798.81 173.74 L800.64 170.48 L802.49 167.22 L804.38 163.96 L806.29 160.71 L808.24 157.45 L810.21 154.19 L812.22 150.94 L814.24 147.68 L816.3 144.42 L818.38 141.16 L820.49 137.91 L822.62 134.65 L824.78 131.39 L826.96 128.14 L829.17 124.88 L831.39 121.62 L833.64 118.37 L835.91 115.11 L838.2 111.85 L840.51 108.59 L842.84 105.34 L845.18 102.08 L847.55 98.82 L849.93 95.57 L852.32 92.31 L854.73 89.05 L857.16 85.8 L859.6 82.54 L862.05 79.28 L864.52 76.03 L866.99 72.77 L869.48 69.51 L871.98 66.25 L874.48 63 L877 59.74 L879.52 56.48 L882.05 53.23 L884.59 49.97 L887.13 46.71 L889.68 43.45 L892.23 40.2 L894.78 36.94 L897.33 33.68 L899.89 30.43 L902.45 27.17"/>
<path d="M902.45 613.43 L899.04 610.17 L895.63 606.92 L892.22 603.66 L888.82 600.4 L885.42 597.14 L882.02 593.89 L878.63 590.63 L875.25 587.37 L871.88 584.12 L868.52 580.86 L865.16 577.6 L861.82 574.35 L858.49 571.09 L855.17 567.83 L851.87 564.58 L848.58 561.32 L845.31 558.06 L842.06 554.8 L838.83 551.55 L835.61 548.29 L832.42 545.03 L829.24 541.78 L826.09 538.52 L822.97 535.26 L819.86 532 L816.78 528.75 L813.73 525.49 L810.71 522.23 L807.71 518.98 L804.74 515.72 L801.8 512.46 L798.89 509.21 L796.02 505.95 L793.17 502.69 L790.36 499.44 L787.59 496.18 L784.84 492.92 L782.14 489.66 L779.47 486.41 L776.84 483.15 L774.24 479.89 L771.69 476.64 L769.17 473.38 L766.7 470.12 L764.27 466.87 L761.88 463.61 L759.53 460.35 L757.22 457.09 L754.96 453.84 L752.75 450.58 L750.58 447.32 L748.46 444.07 L746.38 440.81 L744.35 437.55 L742.37 434.3 L740.44 431.04 L738.56 427.78 L736.72 424.52 L734.94 421.27 L733.21 418.01 L731.53 414.75 L729.9 411.5 L728.33 408.24 L726.81 404.98 L725.34 401.73 L723.92 398.47 L722.56 395.21 L721.26 391.95 L720.01 388.7 L718.82 385.44 L717.68 382.18 L716.59 378.93 L715.57 375.67 L714.6 372.41 L713.69 369.16 L712.83 365.9 L712.04 362.64 L711.3 359.38 L710.62 356.13 L710 352.87 L709.44 349.61 L708.93 346.36 L708.49 343.1 L708.1 339.84 L707.77 336.59 L707.51 333.33 L707.3 330.07 L707.15 326.81 L707.06 323.56 L707.03 320.3 L707.06 317.04 L707.15 313.79 L707.3 310.53 L707.51 307.27 L707.77 304.01 L708.1 300.76 L708.49 297.5 L708.93 294.24 L709.44 290.99 L710 287.73 L710.62 284.47 L711.3 281.22 L712.04 277.96 L712.83 274.7 L713.69 271.44 L714.6 268.19 L715.57 264.93 L716.59 261.67 L717.68 258.42 L718.82 255.16 L720.01 251.9 L721.26 248.65 L722.56 245.39 L723.92 242.13 L725.34 238.88 L726.81 235.62 L728.33 232.36 L729.9 229.1 L731.53 225.85 L733.21 222.59 L734.94 219.33 L736.72 216.08 L738.56 212.82 L740.44 209.56 L742.37 206.31 L744.35 203.05 L746.38 199.79 L748.46 196.53 L750.58 193.28 L752.75 190.02 L754.96 186.76 L757.22 183.51 L759.53 180.25 L761.88 176.99 L764.27 173.74 L766.7 170.48 L769.17 167.22 L771.69 163.96 L774.24 160.71 L776.84 157.45 L779.47 154.19 L782.14 150.94 L784.84 147.68 L787.59 144.42 L790.36 141.16 L793.17 137.91 L796.02 134.65 L798.89 131.39 L801.8 128.14 L804.74 124.88 L807.71 121.62 L810.71 118.37 L813.73 115.11 L816.78 111.85 L819.86 108.59 L822.97 105.34 L826.09 102.08 L829.24 98.82 L832.42 95.57 L835.61 92.31 L838.83 89.05 L842.06 85.8 L845.31 82.54 L848.58 79.28 L851.87 76.03 L855.17 72.77 L858.49 69.51 L861.82 66.25 L865.16 63 L868.52 59.74 L871.88 56.48 L875.25 53.23 L878.63 49.97 L882.02 46.71 L885.42 43.45 L888.82 40.2 L892.22 36.94 L895.63 33.68 L899.04 30.43 L902.45 27.17"/>
<path d="M902.45 613.43 L898.19 610.17 L893.92 606.92 L889.67 603.66 L885.41 600.4 L881.16 597.14 L876.92 593.89 L872.68 590.63 L868.45 587.37 L864.24 584.12 L860.03 580.86 L855.84 577.6 L851.66 574.35 L847.5 571.09 L843.35 567.83 L839.23 564.58 L835.12 561.32 L831.03 558.06 L826.96 554.8 L822.92 551.55 L818.9 548.29 L814.91 545.03 L810.94 541.78 L807 538.52 L803.09 535.26 L799.21 532 L795.37 528.75 L791.55 525.49 L787.77 522.23 L784.02 518.98 L780.31 515.72 L776.64 512.46 L773 509.21 L769.41 505.95 L765.85 502.69 L762.34 499.44 L758.87 496.18 L755.44 492.92 L752.06 489.66 L748.72 486.41 L745.43 483.15 L742.19 479.89 L739 476.64 L735.85 473.38 L732.76 470.12 L729.72 466.87 L726.73 463.61 L723.8 460.35 L720.92 457.09 L718.09 453.84 L715.32 450.58 L712.61 447.32 L709.96 444.07 L707.36 440.81 L704.83 437.55 L702.35 434.3 L699.94 431.04 L697.58 427.78 L695.29 424.52 L693.07 421.27 L690.9 418.01 L688.8 414.75 L686.77 411.5 L684.8 408.24 L682.9 404.98 L681.06 401.73 L679.29 398.47 L677.59 395.21 L675.96 391.95 L674.4 388.7 L672.91 385.44 L671.48 382.18 L670.13 378.93 L668.85 375.67 L667.64 372.41 L666.5 369.16 L665.43 365.9 L664.44 362.64 L663.51 359.38 L662.66 356.13 L661.89 352.87 L661.18 349.61 L660.55 346.36 L660 343.1 L659.51 339.84 L659.1 336.59 L658.77 333.33 L658.51 330.07 L658.32 326.81 L658.21 323.56 L658.18 320.3 L658.21 317.04 L658.32 313.79 L658.51 310.53 L658.77 307.27 L659.1 304.01 L659.51 300.76 L660 297.5 L660.55 294.24 L661.18 290.99 L661.89 287.73 L662.66 284.47 L663.51 281.22 L664.44 277.96 L665.43 274.7 L666.5 271.44 L667.64 268.19 L668.85 264.93 L670.13 261.67 L671.48 258.42 L672.91 255.16 L674.4 251.9 L675.96 248.65 L677.59 245.39 L679.29 242.13 L681.06 238.88 L682.9 235.62 L684.8 232.36 L686.77 229.1 L688.8 225.85 L690.9 222.59 L693.07 219.33 L695.29 216.08 L697.58 212.82 L699.94 209.56 L702.35 206.31 L704.83 203.05 L707.36 199.79 L709.96 196.53 L712.61 193.28 L715.32 190.02 L718.09 186.76 L720.92 183.51 L723.8 180.25 L726.73 176.99 L729.72 173.74 L732.76 170.48 L735.85 167.22 L739 163.96 L742.19 160.71 L745.43 157.45 L748.72 154.19 L752.06 150.94 L755.44 147.68 L758.87 144.42 L762.34 141.16 L765.85 137.91 L769.41 134.65 L773 131.39 L776.64 128.14 L780.31 124.88 L784.02 121.62 L787.77 118.37 L791.55 115.11 L795.37 111.85 L799.21 108.59 L803.09 105.34 L807 102.08 L810.94 98.82 L814.91 95.57 L818.9 92.31 L822.92 89.05 L826.96 85.8 L831.03 82.54 L835.12 79.28 L839.23 76.03 L843.35 72.77 L847.5 69.51 L851.66 66.25 L855.84 63 L860.03 59.74 L864.24 56.48 L868.45 53.23 L872.68 49.97 L876.92 46.71 L881.16 43.45 L885.41 40.2 L889.67 36.94 L893.92 33.68 L898.19 30.43 L902.45 27.17"/>
<path d="M902.45 613.43 L897.33 610.17 L892.22 606.92 L887.11 603.66 L882 600.4 L876.9 597.14 L871.81 593.89 L866.73 590.63 L861.65 587.37 L856.59 584.12 L851.55 580.86 L846.52 577.6 L841.5 574.35 L836.51 571.09 L831.54 567.83 L826.58 564.58 L821.65 561.32 L816.75 558.06 L811.87 554.8 L807.02 551.55 L802.19 548.29 L797.4 545.03 L792.64 541.78 L787.91 538.52 L783.22 535.26 L778.57 532 L773.95 528.75 L769.37 525.49 L764.83 522.23 L760.34 518.98 L755.88 515.72 L751.48 512.46 L747.11 509.21 L742.8 505.95 L738.53 502.69 L734.32 499.44 L730.15 496.18 L726.04 492.92 L721.98 489.66 L717.98 486.41 L714.03 483.15 L710.14 479.89 L706.31 476.64 L702.54 473.38 L698.82 470.12 L695.18 466.87 L691.59 463.61 L688.07 460.35 L684.61 457.09 L681.22 453.84 L677.9 450.58 L674.65 447.32 L671.46 444.07 L668.35 440.81 L665.3 437.55 L662.33 434.3 L659.43 431.04 L656.61 427.78 L653.86 424.52 L651.19 421.27 L648.59 418.01 L646.07 414.75 L643.63 411.5 L641.27 408.24 L638.99 404.98 L636.78 401.73 L634.66 398.47 L632.62 395.21 L630.66 391.95 L628.79 388.7 L627 385.44 L625.29 382.18 L623.67 378.93 L622.13 375.67 L620.68 372.41 L619.31 369.16 L618.03 365.9 L616.83 362.64 L615.73 359.38 L614.71 356.13 L613.77 352.87 L612.93 349.61 L612.17 346.36 L611.5 343.1 L610.93 339.84 L610.44 336.59 L610.03 333.33 L609.72 330.07 L609.5 326.81 L609.36 323.56 L609.32 320.3 L609.36 317.04 L609.5 313.79 L609.72 310.53 L610.03 307.27 L610.44 304.01 L610.93 300.76 L611.5 297.5 L612.17 294.24 L612.93 290.99 L613.77 287.73 L614.71 284.47 L615.73 281.22 L616.83 277.96 L618.03 274.7 L619.31 271.44 L620.68 268.19 L622.13 264.93 L623.67 261.67 L625.29 258.42 L627 255.16 L628.79 251.9 L630.66 248.65 L632.62 245.39 L634.66 242.13 L636.78 238.88 L638.99 235.62 L641.27 232.36 L643.63 229.1 L646.07 225.85 L648.59 222.59 L651.19 219.33 L653.86 216.08 L656.61 212.82 L659.43 209.56 L662.33 206.31 L665.3 203.05 L668.35 199.79 L671.46 196.53 L674.65 193.28 L677.9 190.02 L681.22 186.76 L684.61 183.51 L688.07 180.25 L691.59 176.99 L695.18 173.74 L698.82 170.48 L702.54 167.22 L706.31 163.96 L710.14 160.71 L714.03 157.45 L717.98 154.19 L721.98 150.94 L726.04 147.68 L730.15 144.42 L734.32 141.16 L738.53 137.91 L742.8 134.65 L747.11 131.39 L751.48 128.14 L755.88 124.88 L760.34 121.62 L764.83 118.37 L769.37 115.11 L773.95 111.85 L778.57 108.59 L783.22 105.34 L787.91 102.08 L792.64 98.82 L797.4 95.57 L802.19 92.31 L807.02 89.05 L811.87 85.8 L816.75 82.54 L821.65 79.28 L826.58 76.03 L831.54 72.77 L836.51 69.51 L841.5 66.25 L846.52 63 L851.55 59.74 L856.59 56.48 L861.65 53.23 L866.73 49.97 L871.81 46.71 L876.9 43.45 L882 40.2 L887.11 36.94 L892.22 33.68 L897.33 30.43 L902.45 27.17"/>
<path d="M902.45 613.43 L896.48 610.17 L890.51 606.92 L884.55 603.66 L878.59 600.4 L872.64 597.14 L866.7 593.89 L860.77 590.63 L854.85 587.37 L848.95 584.12 L843.06 580.86 L837.2 577.6 L831.35 574.35 L825.52 571.09 L819.72 567.83 L813.94 564.58 L808.19 561.32 L802.46 558.06 L796.77 554.8 L791.11 551.55 L785.48 548.29 L779.89 545.03 L774.34 541.78 L768.83 538.52 L763.35 535.26 L757.92 532 L752.53 528.75 L747.19 525.49 L741.9 522.23 L736.65 518.98 L731.46 515.72 L726.31 512.46 L721.23 509.21 L716.19 505.95 L711.21 502.69 L706.3 499.44 L701.44 496.18 L696.64 492.92 L691.9 489.66 L687.23 486.41 L682.63 483.15 L678.09 479.89 L673.62 476.64 L669.22 473.38 L664.89 470.12 L660.63 466.87 L656.45 463.61 L652.34 460.35 L648.31 457.09 L644.35 453.84 L640.47 450.58 L636.68 447.32 L632.96 444.07 L629.33 440.81 L625.78 437.55 L622.31 434.3 L618.93 431.04 L615.64 427.78 L612.43 424.52 L609.31 421.27 L606.28 418.01 L603.34 414.75 L600.5 411.5 L597.74 408.24 L595.08 404.98 L592.51 401.73 L590.03 398.47 L587.65 395.21 L585.37 391.95 L583.18 388.7 L581.09 385.44 L579.1 382.18 L577.2 378.93 L575.41 375.67 L573.71 372.41 L572.12 369.16 L570.62 365.9 L569.23 362.64 L567.94 359.38 L566.75 356.13 L565.66 352.87 L564.68 349.61 L563.79 346.36 L563.01 343.1 L562.34 339.84 L561.77 336.59 L561.3 333.33 L560.93 330.07 L560.67 326.81 L560.52 323.56 L560.47 320.3 L560.52 317.04 L560.67 313.79 L560.93 310.53 L561.3 307.27 L561.77 304.01 L562.34 300.76 L563.01 297.5 L563.79 294.24 L564.68 290.99 L565.66 287.73 L566.75 284.47 L567.94 281.22 L569.23 277.96 L570.62 274.7 L572.12 271.44 L573.71 268.19 L575.41 264.93 L577.2 261.67 L579.1 258.42 L581.09 255.16 L583.18 251.9 L585.37 248.65 L587.65 245.39 L590.03 242.13 L592.51 238.88 L595.08 235.62 L597.74 232.36 L600.5 229.1 L603.34 225.85 L606.28 222.59 L609.31 219.33 L612.43 216.08 L615.64 212.82 L618.93 209.56 L622.31 206.31 L625.78 203.05 L629.33 199.79 L632.96 196.53 L636.68 193.28 L640.47 190.02 L644.35 186.76 L648.31 183.51 L652.34 180.25 L656.45 176.99 L660.63 173.74 L664.89 170.48 L669.22 167.22 L673.62 163.96 L678.09 160.71 L682.63 157.45 L687.23 154.19 L691.9 150.94 L696.64 147.68 L701.44 144.42 L706.3 141.16 L711.21 137.91 L716.19 134.65 L721.23 131.39 L726.31 128.14 L731.46 124.88 L736.65 121.62 L741.9 118.37 L747.19 115.11 L752.53 111.85 L757.92 108.59 L763.35 105.34 L768.83 102.08 L774.34 98.82 L779.89 95.57 L785.48 92.31 L791.11 89.05 L796.77 85.8 L802.46 82.54 L808.19 79.28 L813.94 76.03 L819.72 72.77 L825.52 69.51 L831.35 66.25 L837.2 63 L843.06 59.74 L848.95 56.48 L854.85 53.23 L860.77 49.97 L866.7 46.71 L872.64 43.45 L878.59 40.2 L884.55 36.94 L890.51 33.68 L896.48 30.43 L902.45 27.17"/>
<path d="M902.45 613.43 L895.63 610.17 L888.81 606.92 L882 603.66 L875.19 600.4 L868.39 597.14 L861.6 593.89 L854.82 590.63 L848.06 587.37 L841.31 584.12 L834.58 580.86 L827.87 577.6 L821.19 574.35 L814.53 571.09 L807.9 567.83 L801.29 564.58 L794.72 561.32 L788.18 558.06 L781.67 554.8 L775.2 551.55 L768.77 548.29 L762.39 545.03 L756.04 541.78 L749.74 538.52 L743.48 535.26 L737.27 532 L731.12 528.75 L725.01 525.49 L718.96 522.23 L712.97 518.98 L707.03 515.72 L701.15 512.46 L695.34 509.21 L689.58 505.95 L683.9 502.69 L678.27 499.44 L672.72 496.18 L667.24 492.92 L661.82 489.66 L656.49 486.41 L651.22 483.15 L646.04 479.89 L640.93 476.64 L635.9 473.38 L630.95 470.12 L626.08 466.87 L621.3 463.61 L616.61 460.35 L612 457.09 L607.48 453.84 L603.05 450.58 L598.71 447.32 L594.46 444.07 L590.31 440.81 L586.25 437.55 L582.29 434.3 L578.43 431.04 L574.66 427.78 L571 424.52 L567.43 421.27 L563.97 418.01 L560.61 414.75 L557.36 411.5 L554.21 408.24 L551.17 404.98 L548.23 401.73 L545.4 398.47 L542.68 395.21 L540.07 391.95 L537.57 388.7 L535.18 385.44 L532.9 382.18 L530.74 378.93 L528.69 375.67 L526.75 372.41 L524.93 369.16 L523.22 365.9 L521.63 362.64 L520.15 359.38 L518.79 356.13 L517.55 352.87 L516.42 349.61 L515.41 346.36 L514.52 343.1 L513.75 339.84 L513.1 336.59 L512.56 333.33 L512.15 330.07 L511.85 326.81 L511.67 323.56 L511.61 320.3 L511.67 317.04 L511.85 313.79 L512.15 310.53 L512.56 307.27 L513.1 304.01 L513.75 300.76 L514.52 297.5 L515.41 294.24 L516.42 290.99 L517.55 287.73 L518.79 284.47 L520.15 281.22 L521.63 277.96 L523.22 274.7 L524.93 271.44 L526.75 268.19 L528.69 264.93 L530.74 261.67 L532.9 258.42 L535.18 255.16 L537.57 251.9 L540.07 248.65 L542.68 245.39 L545.4 242.13 L548.23 238.88 L551.17 235.62 L554.21 232.36 L557.36 229.1 L560.61 225.85 L563.97 222.59 L567.43 219.33 L571 216.08 L574.66 212.82 L578.43 209.56 L582.29 206.31 L586.25 203.05 L590.31 199.79 L594.46 196.53 L598.71 193.28 L603.05 190.02 L607.48 186.76 L612 183.51 L616.61 180.25 L621.3 176.99 L626.08 173.74 L630.95 170.48 L635.9 167.22 L640.93 163.96 L646.04 160.71 L651.22 157.45 L656.49 154.19 L661.82 150.94 L667.24 147.68 L672.72 144.42 L678.27 141.16 L683.9 137.91 L689.58 134.65 L695.34 131.39 L701.15 128.14 L707.03 124.88 L712.97 121.62 L718.96 118.37 L725.01 115.11 L731.12 111.85 L737.27 108.59 L743.48 105.34 L749.74 102.08 L756.04 98.82 L762.39 95.57 L768.77 92.31 L775.2 89.05 L781.67 85.8 L788.18 82.54 L794.72 79.28 L801.29 76.03 L807.9 72.77 L814.53 69.51 L821.19 66.25 L827.87 63 L834.58 59.74 L841.31 56.48 L848.06 53.23 L854.82 49.97 L861.6 46.71 L868.39 43.45 L875.19 40.2 L882 36.94 L888.81 33.68 L895.63 30.43 L902.45 27.17"/>
<path d="M902.45 613.43 L894.78 610.17 L887.1 606.92 L879.44 603.66 L871.78 600.4 L864.13 597.14 L856.49 593.89 L848.86 590.63 L841.26 587.37 L833.67 584.12 L826.1 580.86 L818.55 577.6 L811.03 574.35 L803.54 571.09 L796.08 567.83 L788.65 564.58 L781.25 561.32 L773.9 558.06 L766.58 554.8 L759.3 551.55 L752.07 548.29 L744.88 545.03 L737.74 541.78 L730.65 538.52 L723.61 535.26 L716.63 532 L709.7 528.75 L702.83 525.49 L696.03 522.23 L689.28 518.98 L682.6 515.72 L675.99 512.46 L669.45 509.21 L662.97 505.95 L656.58 502.69 L650.25 499.44 L644 496.18 L637.83 492.92 L631.75 489.66 L625.74 486.41 L619.82 483.15 L613.98 479.89 L608.24 476.64 L602.58 473.38 L597.01 470.12 L591.54 466.87 L586.16 463.61 L580.88 460.35 L575.69 457.09 L570.61 453.84 L565.62 450.58 L560.74 447.32 L555.97 444.07 L551.29 440.81 L546.73 437.55 L542.27 434.3 L537.93 431.04 L533.69 427.78 L529.57 424.52 L525.56 421.27 L521.66 418.01 L517.88 414.75 L514.22 411.5 L510.68 408.24 L507.25 404.98 L503.95 401.73 L500.77 398.47 L497.71 395.21 L494.77 391.95 L491.96 388.7 L489.27 385.44 L486.71 382.18 L484.28 378.93 L481.97 375.67 L479.79 372.41 L477.74 369.16 L475.82 365.9 L474.02 362.64 L472.36 359.38 L470.83 356.13 L469.43 352.87 L468.17 349.61 L467.03 346.36 L466.03 343.1 L465.16 339.84 L464.43 336.59 L463.83 333.33 L463.36 330.07 L463.02 326.81 L462.82 323.56 L462.76 320.3 L462.82 317.04 L463.02 313.79 L463.36 310.53 L463.83 307.27 L464.43 304.01 L465.16 300.76 L466.03 297.5 L467.03 294.24 L468.17 290.99 L469.43 287.73 L470.83 284.47 L472.36 281.22 L474.02 277.96 L475.82 274.7 L477.74 271.44 L479.79 268.19 L481.97 264.93 L484.28 261.67 L486.71 258.42 L489.27 255.16 L491.96 251.9 L494.77 248.65 L497.71 245.39 L500.77 242.13 L503.95 238.88 L507.25 235.62 L510.68 232.36 L514.22 229.1 L517.88 225.85 L521.66 222.59 L525.56 219.33 L529.57 216.08 L533.69 212.82 L537.93 209.56 L542.27 206.31 L546.73 203.05 L551.29 199.79 L555.97 196.53 L560.74 193.28 L565.62 190.02 L570.61 186.76 L575.69 183.51 L580.88 180.25 L586.16 176.99 L591.54 173.74 L597.01 170.48 L602.58 167.22 L608.24 163.96 L613.98 160.71 L619.82 157.45 L625.74 154.19 L631.75 150.94 L637.83 147.68 L644 144.42 L650.25 141.16 L656.58 137.91 L662.97 134.65 L669.45 131.39 L675.99 128.14 L682.6 124.88 L689.28 121.62 L696.03 118.37 L702.83 115.11 L709.7 111.85 L716.63 108.59 L723.61 105.34 L730.65 102.08 L737.74 98.82 L744.88 95.57 L752.07 92.31 L759.3 89.05 L766.58 85.8 L773.9 82.54 L781.25 79.28 L788.65 76.03 L796.08 72.77 L803.54 69.51 L811.03 66.25 L818.55 63 L826.1 59.74 L833.67 56.48 L841.26 53.23 L848.86 49.97 L856.49 46.71 L864.13 43.45 L871.78 40.2 L879.44 36.94 L887.1 33.68 L894.78 30.43 L902.45 27.17"/>
<path d="M902.45 613.43 L893.92 610.17 L885.4 606.92 L876.88 603.66 L868.37 600.4 L859.87 597.14 L851.38 593.89 L842.91 590.63 L834.46 587.37 L826.02 584.12 L817.61 580.86 L809.23 577.6 L800.87 574.35 L792.55 571.09 L784.26 567.83 L776 564.58 L767.79 561.32 L759.61 558.06 L751.48 554.8 L743.39 551.55 L735.36 548.29 L727.37 545.03 L719.44 541.78 L711.56 538.52 L703.74 535.26 L695.98 532 L688.28 528.75 L680.65 525.49 L673.09 522.23 L665.6 518.98 L658.17 515.72 L650.83 512.46 L643.56 509.21 L636.37 505.95 L629.26 502.69 L622.23 499.44 L615.29 496.18 L608.43 492.92 L601.67 489.66 L595 486.41 L588.42 483.15 L581.93 479.89 L575.55 476.64 L569.26 473.38 L563.07 470.12 L556.99 466.87 L551.02 463.61 L545.15 460.35 L539.39 457.09 L533.74 453.84 L528.2 450.58 L522.78 447.32 L517.47 444.07 L512.28 440.81 L507.2 437.55 L502.25 434.3 L497.42 431.04 L492.72 427.78 L488.14 424.52 L483.68 421.27 L479.35 418.01 L475.15 414.75 L471.09 411.5 L467.15 408.24 L463.34 404.98 L459.67 401.73 L456.14 398.47 L452.74 395.21 L449.47 391.95 L446.35 388.7 L443.36 385.44 L440.52 382.18 L437.81 378.93 L435.25 375.67 L432.83 372.41 L430.55 369.16 L428.41 365.9 L426.42 362.64 L424.58 359.38 L422.88 356.13 L421.32 352.87 L419.91 349.61 L418.65 346.36 L417.54 343.1 L416.58 339.84 L415.76 336.59 L415.09 333.33 L414.57 330.07 L414.2 326.81 L413.97 323.56 L413.9 320.3 L413.97 317.04 L414.2 313.79 L414.57 310.53 L415.09 307.27 L415.76 304.01 L416.58 300.76 L417.54 297.5 L418.65 294.24 L419.91 290.99 L421.32 287.73 L422.88 284.47 L424.58 281.22 L426.42 277.96 L428.41 274.7 L430.55 271.44 L432.83 268.19 L435.25 264.93 L437.81 261.67 L440.52 258.42 L443.36 255.16 L446.35 251.9 L449.47 248.65 L452.74 245.39 L456.14 242.13 L459.67 238.88 L463.34 235.62 L467.15 232.36 L471.09 229.1 L475.15 225.85 L479.35 222.59 L483.68 219.33 L488.14 216.08 L492.72 212.82 L497.42 209.56 L502.25 206.31 L507.2 203.05 L512.28 199.79 L517.47 196.53 L522.78 193.28 L528.2 190.02 L533.74 186.76 L539.39 183.51 L545.15 180.25 L551.02 176.99 L556.99 173.74 L563.07 170.48 L569.26 167.22 L575.55 163.96 L581.93 160.71 L588.42 157.45 L595 154.19 L601.67 150.94 L608.43 147.68 L615.29 144.42 L622.23 141.16 L629.26 137.91 L636.37 134.65 L643.56 131.39 L650.83 128.14 L658.17 124.88 L665.6 121.62 L673.09 118.37 L680.65 115.11 L688.28 111.85 L695.98 108.59 L703.74 105.34 L711.56 102.08 L719.44 98.82 L727.37 95.57 L735.36 92.31 L743.39 89.05 L751.48 85.8 L759.61 82.54 L767.79 79.28 L776 76.03 L784.26 72.77 L792.55 69.51 L800.87 66.25 L809.23 63 L817.61 59.74 L826.02 56.48 L834.46 53.23 L842.91 49.97 L851.38 46.71 L859.87 43.45 L868.37 40.2 L876.88 36.94 L885.4 33.68 L893.92 30.43 L902.45 27.17"/>
<path d="M902.45 613.43 L893.07 610.17 L883.69 606.92 L874.32 603.66 L864.96 600.4 L855.61 597.14 L846.28 593.89 L836.96 590.63 L827.66 587.37 L818.38 584.12 L809.13 580.86 L799.91 577.6 L790.72 574.35 L781.56 571.09 L772.44 567.83 L763.36 564.58 L754.32 561.32 L745.33 558.06 L736.38 554.8 L727.49 551.55 L718.65 548.29 L709.86 545.03 L701.13 541.78 L692.47 538.52 L683.87 535.26 L675.33 532 L666.87 528.75 L658.47 525.49 L650.15 522.23 L641.91 518.98 L633.75 515.72 L625.67 512.46 L617.67 509.21 L609.76 505.95 L601.94 502.69 L594.21 499.44 L586.57 496.18 L579.03 492.92 L571.59 489.66 L564.25 486.41 L557.01 483.15 L549.88 479.89 L542.86 476.64 L535.94 473.38 L529.14 470.12 L522.45 466.87 L515.87 463.61 L509.42 460.35 L503.08 457.09 L496.87 453.84 L490.77 450.58 L484.81 447.32 L478.97 444.07 L473.26 440.81 L467.68 437.55 L462.23 434.3 L456.92 431.04 L451.74 427.78 L446.7 424.52 L441.8 421.27 L437.04 418.01 L432.42 414.75 L427.95 411.5 L423.62 408.24 L419.43 404.98 L415.4 401.73 L411.51 398.47 L407.77 395.21 L404.18 391.95 L400.74 388.7 L397.45 385.44 L394.32 382.18 L391.35 378.93 L388.53 375.67 L385.86 372.41 L383.36 369.16 L381.01 365.9 L378.82 362.64 L376.79 359.38 L374.92 356.13 L373.21 352.87 L371.66 349.61 L370.27 346.36 L369.05 343.1 L367.99 339.84 L367.09 336.59 L366.35 333.33 L365.78 330.07 L365.37 326.81 L365.13 323.56 L365.05 320.3 L365.13 317.04 L365.37 313.79 L365.78 310.53 L366.35 307.27 L367.09 304.01 L367.99 300.76 L369.05 297.5 L370.27 294.24 L371.66 290.99 L373.21 287.73 L374.92 284.47 L376.79 281.22 L378.82 277.96 L381.01 274.7 L383.36 271.44 L385.86 268.19 L388.53 264.93 L391.35 261.67 L394.32 258.42 L397.45 255.16 L400.74 251.9 L404.18 248.65 L407.77 245.39 L411.51 242.13 L415.4 238.88 L419.43 235.62 L423.62 232.36 L427.95 229.1 L432.42 225.85 L437.04 222.59 L441.8 219.33 L446.7 216.08 L451.74 212.82 L456.92 209.56 L462.23 206.31 L467.68 203.05 L473.26 199.79 L478.97 196.53 L484.81 193.28 L490.77 190.02 L496.87 186.76 L503.08 183.51 L509.42 180.25 L515.87 176.99 L522.45 173.74 L529.14 170.48 L535.94 167.22 L542.86 163.96 L549.88 160.71 L557.01 157.45 L564.25 154.19 L571.59 150.94 L579.03 147.68 L586.57 144.42 L594.21 141.16 L601.94 137.91 L609.76 134.65 L617.67 131.39 L625.67 128.14 L633.75 124.88 L641.91 121.62 L650.15 118.37 L658.47 115.11 L666.87 111.85 L675.33 108.59 L683.87 105.34 L692.47 102.08 L701.13 98.82 L709.86 95.57 L718.65 92.31 L727.49 89.05 L736.38 85.8 L745.33 82.54 L754.32 79.28 L763.36 76.03 L772.44 72.77 L781.56 69.51 L790.72 66.25 L799.91 63 L809.13 59.74 L818.38 56.48 L827.66 53.23 L836.96 49.97 L846.28 46.71 L855.61 43.45 L864.96 40.2 L874.32 36.94 L883.69 33.68 L893.07 30.43 L902.45 27.17"/>
<path d="M902.45 613.43 L892.22 610.17 L881.99 606.92 L871.77 603.66 L861.55 600.4 L851.35 597.14 L841.17 593.89 L831 590.63 L820.86 587.37 L810.74 584.12 L800.65 580.86 L790.59 577.6 L780.56 574.35 L770.57 571.09 L760.62 567.83 L750.71 564.58 L740.85 561.32 L731.04 558.06 L721.29 554.8 L711.58 551.55 L701.94 548.29 L692.35 545.03 L682.83 541.78 L673.38 538.52 L664 535.26 L654.69 532 L645.45 528.75 L636.29 525.49 L627.22 522.23 L618.23 518.98 L609.32 515.72 L600.5 512.46 L591.78 509.21 L583.15 505.95 L574.62 502.69 L566.19 499.44 L557.86 496.18 L549.63 492.92 L541.51 489.66 L533.5 486.41 L525.61 483.15 L517.83 479.89 L510.17 476.64 L502.62 473.38 L495.2 470.12 L487.9 466.87 L480.73 463.61 L473.69 460.35 L466.77 457.09 L459.99 453.84 L453.35 450.58 L446.84 447.32 L440.47 444.07 L434.24 440.81 L428.16 437.55 L422.21 434.3 L416.42 431.04 L410.77 427.78 L405.27 424.52 L399.93 421.27 L394.73 418.01 L389.7 414.75 L384.81 411.5 L380.09 408.24 L375.52 404.98 L371.12 401.73 L366.87 398.47 L362.79 395.21 L358.88 391.95 L355.13 388.7 L351.55 385.44 L348.13 382.18 L344.88 378.93 L341.81 375.67 L338.9 372.41 L336.17 369.16 L333.6 365.9 L331.22 362.64 L329 359.38 L326.96 356.13 L325.1 352.87 L323.41 349.61 L321.9 346.36 L320.56 343.1 L319.4 339.84 L318.42 336.59 L317.62 333.33 L316.99 330.07 L316.55 326.81 L316.28 323.56 L316.19 320.3 L316.28 317.04 L316.55 313.79 L316.99 310.53 L317.62 307.27 L318.42 304.01 L319.4 300.76 L320.56 297.5 L321.9 294.24 L323.41 290.99 L325.1 287.73 L326.96 284.47 L329 281.22 L331.22 277.96 L333.6 274.7 L336.17 271.44 L338.9 268.19 L341.81 264.93 L344.88 261.67 L348.13 258.42 L351.55 255.16 L355.13 251.9 L358.88 248.65 L362.79 245.39 L366.87 242.13 L371.12 238.88 L375.52 235.62 L380.09 232.36 L384.81 229.1 L389.7 225.85 L394.73 222.59 L399.93 219.33 L405.27 216.08 L410.77 212.82 L416.42 209.56 L422.21 206.31 L428.16 203.05 L434.24 199.79 L440.47 196.53 L446.84 193.28 L453.35 190.02 L459.99 186.76 L466.77 183.51 L473.69 180.25 L480.73 176.99 L487.9 173.74 L495.2 170.48 L502.62 167.22 L510.17 163.96 L517.83 160.71 L525.61 157.45 L533.5 154.19 L541.51 150.94 L549.63 147.68 L557.86 144.42 L566.19 141.16 L574.62 137.91 L583.15 134.65 L591.78 131.39 L600.5 128.14 L609.32 124.88 L618.23 121.62 L627.22 118.37 L636.29 115.11 L645.45 111.85 L654.69 108.59 L664 105.34 L673.38 102.08 L682.83 98.82 L692.35 95.57 L701.94 92.31 L711.58 89.05 L721.29 85.8 L731.04 82.54 L740.85 79.28 L750.71 76.03 L760.62 72.77 L770.57 69.51 L780.56 66.25 L790.59 63 L800.65 59.74 L810.74 56.48 L820.86 53.23 L831 49.97 L841.17 46.71 L851.35 43.45 L861.55 40.2 L871.77 36.94 L881.99 33.68 L892.22 30.43 L902.45 27.17"/>
<path d="M1054.19 565 L750.71 565"/>
<path d="M1195.58 516 L609.32 516"/>
<path d="M1317 467 L487.9 467"/>
<path d="M1410.17 418 L394.73 418"/>
<path d="M1468.73 369 L336.17 369"/>
<path d="M1488.71 320 L316.19 320"/>
<path d="M1468.73 271 L336.17 271"/>
<path d="M1410.17 223 L394.73 223"/>
<path d="M1317 174 L487.9 174"/>
<path d="M1195.58 125 L609.32 125"/>
<path d="M1054.19 76 L750.71 76"/>
</g>
<g fill="none" stroke="#808080" stroke-opacity="0.45" stroke-width="1.39" stroke-dasharray="1.39 2.29">
<path d="M968 126 L966.3 124.85 L964.61 123.71 L962.91 122.58 L961.23 121.45 L959.54 120.34 L957.86 119.24 L956.19 118.16 L954.52 117.08 L952.85 116.02 L951.19 114.97 L949.53 113.93 L947.88 112.9 L946.24 111.89 L944.6 110.9 L942.97 109.92 L941.34 108.96 L939.72 108.01 L938.11 107.08 L936.5 106.17 L934.9 105.27 L933.31 104.4 L931.72 103.54 L930.14 102.7 L928.57 101.89 L927 101.1 L925.44 100.32 L923.88 99.58 L922.34 98.85 L920.79 98.15 L919.26 97.48 L917.73 96.83 L916.2 96.2 L914.68 95.61 L913.17 95.04 L911.66 94.5 L910.15 93.99 L908.65 93.52 L907.15 93.07 L905.65 92.65 L904.15 92.27 L902.65 91.91 L901.16 91.6 L899.66 91.31 L898.16 91.06 L896.66 90.84 L895.15 90.66 L893.65 90.51 L892.13 90.4 L890.62 90.33 L889.09 90.29 L887.56 90.28 L886.02 90.32 L884.47 90.38 L882.91 90.49 L881.34 90.62 L879.76 90.8 L878.17 91.01 L876.57 91.25 L874.95 91.53 L873.32 91.84 L871.67 92.18 L870.01 92.56 L868.33 92.97 L866.64 93.41 L864.93 93.88 L863.21 94.38 L861.47 94.91 L859.71 95.48 L857.94 96.06 L856.15 96.68 L854.35 97.32 L852.53 97.99 L850.69 98.69 L848.83 99.41 L846.96 100.15 L845.08 100.92 L843.18 101.7 L841.26 102.51 L839.33 103.35 L837.38 104.2 L835.42 105.07 L833.45 105.96 L831.46 106.87 L829.46 107.79 L827.44 108.74 L825.42 109.7 L823.38 110.67 L821.33 111.66 L819.27 112.67 L817.2 113.69 L815.12 114.73 L813.03 115.77 L810.93 116.83 L808.82 117.91 L806.7 118.99 L804.58 120.09 L802.44 121.2 L800.3 122.32 L798.16 123.45 L796.01 124.58 L793.85 125.73 L791.69 126.89 L789.52 128.06 L787.35 129.23 L785.17 130.42 L783 131.61 L780.81 132.81 L778.63 134.02 L776.44 135.24 L774.25 136.46 L772.06 137.69 L769.87 138.92 L767.68 140.17 L765.49 141.41 L763.29 142.67 L761.1 143.93 L758.91 145.19 L756.72 146.47 L754.53 147.74 L752.34 149.02 L750.15 150.31 L747.97 151.6 L745.79 152.9 L743.61 154.2 L741.44 155.5 L739.26 156.81 L737.1 158.12 L734.93 159.44 L732.77 160.76 L730.62 162.08 L728.47 163.41 L726.32 164.74 L724.18 166.08 L722.05 167.42 L719.92 168.76 L717.8 170.1 L715.69 171.45 L713.58 172.8 L711.48 174.15 L709.38 175.51 L707.3 176.87 L705.22 178.23 L703.15 179.59 L701.09 180.96 L699.03 182.32 L696.99 183.69 L694.95 185.07 L692.92 186.44 L690.91 187.82 L688.9 189.2 L686.9 190.58 L684.91 191.96 L682.93 193.35 L680.96 194.74 L679.01 196.12 L677.06 197.51 L675.12 198.91 L673.2 200.3 L671.28 201.7 L669.38 203.09 L667.49 204.49 L665.61 205.89 L663.75 207.29 L661.89 208.7 L660.05 210.1 L658.22 211.51 L656.4 212.91 L654.6 214.32 L652.81 215.73 L651.03 217.14 L649.27 218.56 L647.52 219.97 L645.78 221.38 L644.06 222.8 L642.35 224.21 L640.66 225.63 L638.98 227.05 L637.31 228.47 L635.66 229.89 L634.02 231.31 L632.4 232.73 L630.79 234.16 L629.2 235.58 L627.63 237.01 L626.07 238.43 L624.52 239.86 L622.99 241.28 L621.48 242.71 L619.98 244.14 L618.5 245.57 L617.04 247 L615.59 248.43 L614.15 249.86 L612.74 251.3 L611.34 252.73 L609.96 254.16 L608.59 255.6 L607.24 257.03 L605.91 258.46 L604.6 259.9"/>
<path d="M1019 204.4 L1017.5 202.33 L1015.98 200.26 L1014.45 198.19 L1012.9 196.12 L1011.34 194.06 L1009.77 191.99 L1008.19 189.93 L1006.6 187.87 L1004.99 185.81 L1003.37 183.75 L1001.74 181.69 L1000.1 179.64 L998.45 177.59 L996.79 175.54 L995.12 173.49 L993.43 171.45 L991.74 169.4 L990.04 167.36 L988.33 165.33 L986.61 163.29 L984.88 161.26 L983.15 159.23 L981.4 157.21 L979.65 155.18 L977.89 153.17 L976.13 151.15 L974.36 149.14 L972.58 147.13 L970.79 145.13 L969 143.13 L967.21 141.14 L965.41 139.15 L963.6 137.17 L961.8 135.19 L959.98 133.22 L958.17 131.26 L956.35 129.3 L954.53 127.35 L952.7 125.4 L950.88 123.47 L949.05 121.54 L947.22 119.62 L945.4 117.71 L943.57 115.81 L941.74 113.92 L939.91 112.04 L938.09 110.18 L936.26 108.33 L934.44 106.49 L932.62 104.67 L930.8 102.86 L928.99 101.07 L927.18 99.3 L925.38 97.55 L923.58 95.82 L921.78 94.12 L920 92.44 L918.21 90.79 L916.43 89.16 L914.66 87.57 L912.89 86.01 L911.13 84.49 L909.38 83.01 L907.63 81.57 L905.88 80.18 L904.14 78.84 L902.39 77.55 L900.65 76.32 L898.91 75.16 L897.16 74.06 L895.4 73.04 L893.63 72.1 L891.85 71.24 L890.04 70.46 L888.21 69.78 L886.35 69.2 L884.45 68.71 L882.5 68.34 L880.5 68.07 L878.45 67.91 L876.33 67.86 L874.14 67.92 L871.87 68.1 L869.52 68.38 L867.09 68.77 L864.57 69.27 L861.97 69.86 L859.27 70.56 L856.48 71.34 L853.61 72.22 L850.65 73.17 L847.6 74.21 L844.48 75.31 L841.28 76.48 L838 77.72 L834.66 79.01 L831.24 80.36 L827.77 81.76 L824.24 83.2 L820.66 84.69 L817.03 86.21 L813.35 87.78 L809.63 89.37 L805.88 91 L802.09 92.66 L798.27 94.34 L794.42 96.05 L790.54 97.78 L786.64 99.54 L782.72 101.31 L778.79 103.1 L774.84 104.91 L770.88 106.73 L766.9 108.57 L762.92 110.43 L758.93 112.29 L754.94 114.17 L750.95 116.06 L746.95 117.96 L742.95 119.87 L738.96 121.79 L734.97 123.72 L730.98 125.66 L727 127.6 L723.03 129.55 L719.07 131.51 L715.11 133.48 L711.17 135.45 L707.24 137.43 L703.32 139.41 L699.42 141.4 L695.53 143.4 L691.66 145.4 L687.81 147.4 L683.97 149.41 L680.16 151.42 L676.36 153.43 L672.59 155.45 L668.83 157.47 L665.1 159.5 L661.39 161.53 L657.71 163.56 L654.05 165.6 L650.42 167.63 L646.81 169.67 L643.23 171.72 L639.68 173.76 L636.15 175.81 L632.66 177.86 L629.19 179.91 L625.76 181.97 L622.36 184.02 L618.98 186.08 L615.64 188.14 L612.33 190.2 L609.06 192.26 L605.82 194.33 L602.61 196.39 L599.44 198.46 L596.3 200.53 L593.2 202.6 L590.14 204.67 L587.11 206.75 L584.13 208.82 L581.18 210.9 L578.26 212.97 L575.39 215.05 L572.56 217.13 L569.76 219.21 L567.01 221.29 L564.29 223.37 L561.62 225.45 L558.99 227.53 L556.4 229.62 L553.86 231.7 L551.35 233.79 L548.89 235.87 L546.48 237.96 L544.11 240.05 L541.78 242.14 L539.49 244.23 L537.26 246.31 L535.06 248.4 L532.91 250.5 L530.81 252.59 L528.76 254.68 L526.75 256.77 L524.79 258.86 L522.87 260.95 L521 263.05 L519.19 265.14 L517.41 267.24 L515.69 269.33 L514.02 271.42 L512.39 273.52 L510.81 275.62 L509.29 277.71 L507.81 279.81 L506.38 281.9 L505 284"/>
</g>
<g fill="none" stroke="#8a8a8a" stroke-width="1.39">
<path d="M968 126 L978 132.4"/>
<path d="M1019 204.4 L1027.6 216.4"/>
</g>
<path d="M827.45 65.8 L826 66.75 L824.55 67.71 L823.09 68.67 L821.64 69.63 L820.17 70.6 L818.71 71.56 L817.24 72.53 L815.77 73.5 L814.3 74.48 L812.83 75.45 L811.36 76.43 L809.89 77.41 L808.42 78.39 L806.94 79.38 L805.47 80.36 L804 81.35 L802.52 82.33 L801.05 83.32 L799.58 84.31 L798.11 85.3 L796.64 86.29 L795.18 87.28 L793.71 88.28 L792.25 89.27 L790.78 90.27 L789.32 91.26 L787.86 92.26 L786.4 93.26 L784.95 94.26 L783.5 95.25 L782.05 96.25 L780.6 97.25 L779.15 98.26 L777.71 99.26 L776.27 100.26 L774.83 101.26 L773.4 102.26 L771.96 103.27 L770.54 104.27 L769.11 105.28 L767.69 106.28 L766.27 107.29 L764.85 108.29 L763.44 109.3 L762.03 110.3 L760.63 111.31 L759.22 112.32 L757.83 113.32 L756.43 114.33 L755.04 115.34 L753.65 116.35 L752.27 117.36 L750.89 118.37 L749.52 119.38 L748.14 120.38 L746.78 121.39 L745.41 122.4 L744.06 123.41 L742.7 124.43 L741.35 125.44 L740.01 126.45 L738.67 127.46 L737.33 128.47 L736 129.48 L734.67 130.49 L733.35 131.5 L732.03 132.52 L730.72 133.53 L729.41 134.54 L728.1 135.55 L726.81 136.57 L725.51 137.58 L724.22 138.59 L722.94 139.6 L721.66 140.62 L720.39 141.63 L719.12 142.65 L717.86 143.66 L716.6 144.67 L715.35 145.69 L714.1 146.7 L712.86 147.71 L711.62 148.73 L710.39 149.74 L709.16 150.76 L707.95 151.77 L706.73 152.79 L705.52 153.8 L704.32 154.82 L703.12 155.83 L701.93 156.85 L700.75 157.86 L699.57 158.88 L698.39 159.89 L697.23 160.91 L696.06 161.92 L694.91 162.94 L693.76 163.96 L692.62 164.97 L691.48 165.99 L690.35 167 L689.22 168.02 L688.1 169.04 L686.99 170.05 L685.88 171.07 L684.78 172.08 L683.69 173.1 L682.6 174.12 L681.52 175.13 L680.45 176.15 L679.38 177.17 L678.32 178.18 L677.27 179.2 L676.22 180.22 L675.18 181.23 L674.14 182.25 L673.11 183.27 L672.09 184.29 L671.08 185.3 L670.07 186.32 L669.07 187.34 L668.08 188.35 L667.09 189.37 L666.11 190.39 L665.14 191.41 L664.17 192.42 L663.21 193.44 L662.26 194.46 L661.32 195.48 L660.38 196.49 L659.45 197.51 L658.52 198.53 L657.61 199.55 L656.7 200.56 L655.8 201.58 L654.9 202.6 L654.02 203.62 L653.14 204.64 L652.27 205.65 L651.4 206.67 L650.54 207.69 L649.69 208.71 L648.85 209.73 L648.02 210.74 L647.19 211.76 L646.37 212.78 L645.56 213.8 L644.75 214.82 L643.96 215.84 L643.17 216.85 L642.39 217.87 L641.61 218.89 L640.85 219.91 L640.09 220.93 L639.34 221.95 L638.59 222.96 L637.86 223.98 L637.13 225 L636.41 226.02 L635.7 227.04 L635 228.06 L634.3 229.07 L633.62 230.09 L632.94 231.11 L632.27 232.13 L631.6 233.15 L630.95 234.17 L630.3 235.19 L629.66 236.2 L629.03 237.22 L628.41 238.24 L627.79 239.26 L627.19 240.28 L626.59 241.3 L626 242.32 L625.42 243.34 L624.84 244.36 L624.28 245.37 L623.72 246.39 L623.17 247.41 L622.63 248.43 L622.1 249.45 L621.58 250.47 L621.06 251.49 L620.55 252.51 L620.06 253.53 L619.57 254.54 L619.08 255.56 L618.61 256.58 L618.15 257.6 L617.69 258.62 L617.24 259.64 L616.8 260.66 L616.37 261.68 L615.95 262.7 L615.54 263.72 L615.13 264.74 L614.73 265.75 L614.35 266.77 L613.97 267.79" fill="none" stroke="#2ab07f" stroke-width="1.39" stroke-dasharray="1.39 2.29"/>
<path d="M827.45 65.8 L856.4 46.3" fill="none" stroke="#2ab07f" stroke-width="1.6"/>
<rect x="856" y="45" width="2.2" height="2.2" fill="#f4704a"/>
<path d="M584.1 269 L584.7 267.73 L585.38 266.47 L586.14 265.21 L586.97 263.96 L587.88 262.72 L588.86 261.5 L589.9 260.29 L591 259.11 L592.17 257.95 L593.39 256.82 L594.66 255.72 L595.98 254.65 L597.34 253.62 L598.73 252.64 L600.16 251.69 L601.61 250.8 L603.08 249.95 L604.57 249.15 L606.07 248.41 L607.57 247.72 L609.08 247.1 L610.57 246.53 L612.06 246.03 L613.53 245.59 L614.99 245.21 L616.41 244.9 L617.81 244.66 L619.18 244.49 L620.5 244.39 L621.79 244.35 L623.03 244.39 L624.22 244.49 L625.36 244.66 L626.45 244.9 L627.48 245.21 L628.45 245.59 L629.36 246.03 L630.21 246.53 L631 247.1 L631.72 247.72 L632.38 248.41 L632.97 249.15 L633.49 249.95 L633.95 250.8 L634.34 251.69 L634.66 252.64 L634.92 253.62 L635.1 254.65 L635.23 255.72 L635.29 256.82 L635.28 257.95 L635.21 259.11 L635.08 260.29 L634.89 261.5 L634.63 262.72 L634.32 263.96 L633.95 265.21 L633.52 266.47 L633.04 267.73 L632.51 269 L631.92 270.26 L631.28 271.51 L630.59 272.76 L629.86 273.99 L629.08 275.21 L628.25 276.41 L627.38 277.59 L626.47 278.74 L625.52 279.86 L624.54 280.95 L623.51 282.01 L622.46 283.03 L621.37 284.02 L620.25 284.96 L619.1 285.86 L617.93 286.71 L616.73 287.51 L615.52 288.26 L614.28 288.96 L613.02 289.6 L611.76 290.19 L610.48 290.72 L609.19 291.19 L607.89 291.6 L606.59 291.95 L605.29 292.24 L603.99 292.46 L602.7 292.62 L601.42 292.72 L600.15 292.75 L598.89 292.72 L597.66 292.62 L596.44 292.46 L595.25 292.24 L594.1 291.95 L592.97 291.6 L591.88 291.19 L590.84 290.72 L589.83 290.19 L588.87 289.6 L587.97 288.96 L587.12 288.26 L586.33 287.51 L585.59 286.71 L584.93 285.86 L584.33 284.96 L583.79 284.02 L583.34 283.03 L582.95 282.01 L582.65 280.95 L582.42 279.86 L582.27 278.74 L582.21 277.59 L582.23 276.41 L582.33 275.21 L582.51 273.99 L582.78 272.76 L583.14 271.51 L583.58 270.26 L584.1 269Z" fill="none" stroke="#2ab07f" stroke-width="2.08"/>
</g>
<text x="301.56" y="329.9" class="sl"><tspan dx="-0.9" dy="0.9" class="pl">+</tspan><tspan dx="0.9" dy="-0.9">180</tspan></text>
<circle cx="330.47" cy="322.6" r="0.78" fill="none" stroke="#999999" stroke-width="0.6"/>
<text x="399.27" y="329.9" class="sl"><tspan dx="-0.9" dy="0.9" class="pl">+</tspan><tspan dx="0.9" dy="-0.9">150</tspan></text>
<circle cx="428.18" cy="322.6" r="0.78" fill="none" stroke="#999999" stroke-width="0.6"/>
<text x="496.98" y="329.9" class="sl"><tspan dx="-0.9" dy="0.9" class="pl">+</tspan><tspan dx="0.9" dy="-0.9">120</tspan></text>
<circle cx="525.89" cy="322.6" r="0.78" fill="none" stroke="#999999" stroke-width="0.6"/>
<text x="597.64" y="329.9" class="sl"><tspan dx="-0.9" dy="0.9" class="pl">+</tspan><tspan dx="0.9" dy="-0.9">90</tspan></text>
<circle cx="620.65" cy="322.6" r="0.78" fill="none" stroke="#999999" stroke-width="0.6"/>
<text x="695.35" y="329.9" class="sl"><tspan dx="-0.9" dy="0.9" class="pl">+</tspan><tspan dx="0.9" dy="-0.9">60</tspan></text>
<circle cx="718.36" cy="322.6" r="0.78" fill="none" stroke="#999999" stroke-width="0.6"/>
<text x="793.06" y="329.9" class="sl"><tspan dx="-0.9" dy="0.9" class="pl">+</tspan><tspan dx="0.9" dy="-0.9">30</tspan></text>
<circle cx="816.07" cy="322.6" r="0.78" fill="none" stroke="#999999" stroke-width="0.6"/>
<text x="893.72" y="329.9" class="sl"><tspan dx="-0.9" dy="0.9" class="pl">+</tspan><tspan dx="0.9" dy="-0.9">0</tspan></text>
<circle cx="910.83" cy="322.6" r="0.78" fill="none" stroke="#999999" stroke-width="0.6"/>
<text x="985.53" y="329.9" class="sl"><tspan dx="-0.9" dy="0.9" class="pl">+</tspan><tspan dx="0.9" dy="-0.9">330</tspan></text>
<circle cx="1014.44" cy="322.6" r="0.78" fill="none" stroke="#999999" stroke-width="0.6"/>
<text x="1083.24" y="329.9" class="sl"><tspan dx="-0.9" dy="0.9" class="pl">+</tspan><tspan dx="0.9" dy="-0.9">300</tspan></text>
<circle cx="1112.15" cy="322.6" r="0.78" fill="none" stroke="#999999" stroke-width="0.6"/>
<text x="1180.95" y="329.9" class="sl"><tspan dx="-0.9" dy="0.9" class="pl">+</tspan><tspan dx="0.9" dy="-0.9">270</tspan></text>
<circle cx="1209.86" cy="322.6" r="0.78" fill="none" stroke="#999999" stroke-width="0.6"/>
<text x="1278.66" y="329.9" class="sl"><tspan dx="-0.9" dy="0.9" class="pl">+</tspan><tspan dx="0.9" dy="-0.9">240</tspan></text>
<circle cx="1307.57" cy="322.6" r="0.78" fill="none" stroke="#999999" stroke-width="0.6"/>
<text x="1376.37" y="329.9" class="sl"><tspan dx="-0.9" dy="0.9" class="pl">+</tspan><tspan dx="0.9" dy="-0.9">210</tspan></text>
<circle cx="1405.28" cy="322.6" r="0.78" fill="none" stroke="#999999" stroke-width="0.6"/>
<text x="1474.08" y="329.9" class="sl"><tspan dx="-0.9" dy="0.9" class="pl">+</tspan><tspan dx="0.9" dy="-0.9">180</tspan></text>
<circle cx="1502.99" cy="322.6" r="0.78" fill="none" stroke="#999999" stroke-width="0.6"/>
<text x="891.77" y="24.87" class="sl"><tspan dx="-0.9" dy="0.9" class="pl">+</tspan><tspan dx="0.9" dy="-0.9">90</tspan></text>
<circle cx="914.78" cy="17.57" r="0.78" fill="none" stroke="#999999" stroke-width="0.6"/>
<text x="891.77" y="122.9" class="sl"><tspan dx="-0.9" dy="0.9" class="pl">+</tspan><tspan dx="0.9" dy="-0.9">60</tspan></text>
<circle cx="914.78" cy="115.6" r="0.78" fill="none" stroke="#999999" stroke-width="0.6"/>
<text x="891.77" y="220.9" class="sl"><tspan dx="-0.9" dy="0.9" class="pl">+</tspan><tspan dx="0.9" dy="-0.9">30</tspan></text>
<circle cx="914.78" cy="213.6" r="0.78" fill="none" stroke="#999999" stroke-width="0.6"/>
<text x="891.77" y="427.9" class="sl"><tspan dx="-0.9" dy="0.9" class="pl">−</tspan><tspan dx="0.9" dy="-0.9">30</tspan></text>
<circle cx="914.78" cy="420.6" r="0.78" fill="none" stroke="#999999" stroke-width="0.6"/>
<text x="891.77" y="525.9" class="sl"><tspan dx="-0.9" dy="0.9" class="pl">−</tspan><tspan dx="0.9" dy="-0.9">60</tspan></text>
<circle cx="914.78" cy="518.6" r="0.78" fill="none" stroke="#999999" stroke-width="0.6"/>
<text x="891.77" y="623.63" class="sl"><tspan dx="-0.9" dy="0.9" class="pl">−</tspan><tspan dx="0.9" dy="-0.9">90</tspan></text>
<circle cx="914.78" cy="616.33" r="0.78" fill="none" stroke="#999999" stroke-width="0.6"/>
<text x="608.4" y="272.0" class="ori" text-anchor="middle" textLength="19.01" lengthAdjust="spacingAndGlyphs">ORI</text>
<path d="M612.2 268.6 H617.4 M614.8 266 V271.2" stroke="#ff0000" stroke-width="1.0" fill="none"/>
<text transform="translate(316 30.1) scale(1 1.1)" class="mono" textLength="50.17" lengthAdjust="spacingAndGlyphs">UK004M</text>
<text transform="translate(316 43.1) scale(1 1.1)" class="mono" textLength="317.76" lengthAdjust="spacingAndGlyphs">Beg: 20251019 21:26:29 (sol = 206.39°)</text>
<text transform="translate(316 56.7) scale(1 1.1)" class="mono" textLength="317.76" lengthAdjust="spacingAndGlyphs">End: 20251019 23:39:24 (sol = 206.48°)</text>
<text transform="translate(316 69) scale(1 1.1)" class="mono" textLength="317.76" lengthAdjust="spacingAndGlyphs">--------------------------------------</text>
<text transform="translate(316 81.9) scale(1 1.1)" class="mono" textLength="50.17" lengthAdjust="spacingAndGlyphs">...: 2</text>
<text transform="translate(316 95) scale(1 1.1)" class="mono" textLength="50.17" lengthAdjust="spacingAndGlyphs">ORI: 1</text>
<g id="timeline">
<clipPath id="axclip"><rect x="20.5" y="641.5" width="1765" height="201"/></clipPath>
<g clip-path="url(#axclip)">
<text transform="translate(149 696) rotate(-90)" class="mon" textLength="52.94" lengthAdjust="spacingAndGlyphs">APR</text>
<text transform="translate(295 701) rotate(-90)" class="mon" textLength="55.99" lengthAdjust="spacingAndGlyphs">MAY</text>
<text transform="translate(436 688) rotate(-90)" class="mon" textLength="46.97" lengthAdjust="spacingAndGlyphs">JUN</text>
<text transform="translate(577 683) rotate(-90)" class="mon" textLength="41.93" lengthAdjust="spacingAndGlyphs">JUL</text>
<text transform="translate(724 701) rotate(-90)" class="mon" textLength="57.96" lengthAdjust="spacingAndGlyphs">AUG</text>
<text transform="translate(871.8 694) rotate(-90)" class="mon" textLength="49.99" lengthAdjust="spacingAndGlyphs">SEP</text>
<text transform="translate(1017.2 701) rotate(-90)" class="mon" textLength="58" lengthAdjust="spacingAndGlyphs">OCT</text>
<text transform="translate(1170 705) rotate(-90)" class="mon" textLength="58.99" lengthAdjust="spacingAndGlyphs">NOV</text>
<text transform="translate(1319.2 701) rotate(-90)" class="mon" textLength="56.05" lengthAdjust="spacingAndGlyphs">DEC</text>
<text transform="translate(1469 686) rotate(-90)" class="mon" textLength="44.95" lengthAdjust="spacingAndGlyphs">JAN</text>
<text transform="translate(1628.2 696) rotate(-90)" class="mon" textLength="50" lengthAdjust="spacingAndGlyphs">FEB</text>
<text transform="translate(1766.2 706) rotate(-90)" class="mon" textLength="61.08" lengthAdjust="spacingAndGlyphs">MAR</text>
</g>
<rect x="105.92" y="832" width="24.16" height="4" fill="rgb(194,223,35)"/>
<rect x="164.92" y="832" width="180.16" height="4" fill="rgb(194,223,35)"/>
<rect x="365.92" y="832" width="259.16" height="4" fill="rgb(194,223,35)"/>
<rect x="635.92" y="832" width="151.16" height="4" fill="rgb(194,223,35)"/>
<rect x="806.92" y="832" width="93.16" height="4" fill="rgb(194,223,35)"/>
<rect x="919.92" y="832" width="53.16" height="4" fill="rgb(194,223,35)"/>
<rect x="983.92" y="832" width="82.16" height="4" fill="rgb(194,223,35)"/>
<rect x="1081.92" y="832" width="122.16" height="4" fill="rgb(194,223,35)"/>
<rect x="1243.92" y="832" width="82.16" height="4" fill="rgb(194,223,35)"/>
<rect x="1336.92" y="832" width="19.16" height="4" fill="rgb(194,223,35)"/>
<rect x="1380.92" y="832" width="63.16" height="4" fill="rgb(194,223,35)"/>
<rect x="1458.92" y="832" width="53.16" height="4" fill="rgb(194,223,35)"/>
<rect x="1522.92" y="832" width="24.16" height="4" fill="rgb(194,223,35)"/>
<rect x="1723.92" y="832" width="24.16" height="4" fill="rgb(194,223,35)"/>
<rect x="1757.92" y="832" width="24.16" height="4" fill="rgb(194,223,35)"/>
<rect x="164.92" y="816" width="24.16" height="4" fill="rgb(134,213,73)"/>
<rect x="223.92" y="816" width="63.16" height="4" fill="rgb(134,213,73)"/>
<rect x="311.92" y="816" width="29.16" height="4" fill="rgb(134,213,73)"/>
<rect x="365.92" y="816" width="127.16" height="4" fill="rgb(134,213,73)"/>
<rect x="507.92" y="816" width="146.16" height="4" fill="rgb(134,213,73)"/>
<rect x="703.92" y="816" width="34.16" height="4" fill="rgb(134,213,73)"/>
<rect x="772.92" y="816" width="73.16" height="4" fill="rgb(134,213,73)"/>
<rect x="870.92" y="816" width="117.16" height="4" fill="rgb(134,213,73)"/>
<rect x="1002.92" y="816" width="14.16" height="4" fill="rgb(134,213,73)"/>
<rect x="1061.92" y="816" width="151.16" height="4" fill="rgb(134,213,73)"/>
<rect x="1243.92" y="816" width="23.16" height="4" fill="rgb(134,213,73)"/>
<rect x="1292.92" y="816" width="23.16" height="4" fill="rgb(134,213,73)"/>
<rect x="1341.92" y="816" width="23.16" height="4" fill="rgb(134,213,73)"/>
<rect x="1385.92" y="816" width="43.16" height="4" fill="rgb(134,213,73)"/>
<rect x="1458.92" y="816" width="24.16" height="4" fill="rgb(134,213,73)"/>
<rect x="1547.92" y="816" width="23.16" height="4" fill="rgb(134,213,73)"/>
<rect x="164.92" y="800" width="24.16" height="4" fill="rgb(82,197,105)"/>
<rect x="257.92" y="800" width="230.16" height="4" fill="rgb(82,197,105)"/>
<rect x="507.92" y="800" width="107.16" height="4" fill="rgb(82,197,105)"/>
<rect x="625.92" y="800" width="92.16" height="4" fill="rgb(82,197,105)"/>
<rect x="728.92" y="800" width="97.16" height="4" fill="rgb(82,197,105)"/>
<rect x="948.92" y="800" width="201.16" height="4" fill="rgb(82,197,105)"/>
<rect x="1159.92" y="800" width="88.16" height="4" fill="rgb(82,197,105)"/>
<rect x="1257.92" y="800" width="186.16" height="4" fill="rgb(82,197,105)"/>
<rect x="1458.92" y="800" width="24.16" height="4" fill="rgb(82,197,105)"/>
<rect x="1552.92" y="800" width="23.16" height="4" fill="rgb(82,197,105)"/>
<rect x="193.92" y="783" width="24.16" height="4" fill="rgb(42,176,127)"/>
<rect x="321.92" y="783" width="185.16" height="4" fill="rgb(42,176,127)"/>
<rect x="517.92" y="783" width="24.16" height="4" fill="rgb(42,176,127)"/>
<rect x="556.92" y="783" width="127.16" height="4" fill="rgb(42,176,127)"/>
<rect x="806.92" y="783" width="24.16" height="4" fill="rgb(42,176,127)"/>
<rect x="953.92" y="783" width="19.16" height="4" fill="rgb(42,176,127)"/>
<rect x="988.92" y="783" width="136.16" height="4" fill="rgb(42,176,127)"/>
<rect x="1154.92" y="783" width="63.16" height="4" fill="rgb(42,176,127)"/>
<rect x="1243.92" y="783" width="23.16" height="4" fill="rgb(42,176,127)"/>
<rect x="1316.92" y="783" width="24.16" height="4" fill="rgb(42,176,127)"/>
<rect x="1395.92" y="783" width="23.16" height="4" fill="rgb(42,176,127)"/>
<rect x="1463.92" y="783" width="186.16" height="4" fill="rgb(42,176,127)"/>
<rect x="340.92" y="767" width="29.16" height="4" fill="rgb(30,155,138)"/>
<rect x="409.92" y="767" width="38.16" height="4" fill="rgb(30,155,138)"/>
<rect x="468.92" y="767" width="24.16" height="4" fill="rgb(30,155,138)"/>
<rect x="527.92" y="767" width="18.16" height="4" fill="rgb(30,155,138)"/>
<rect x="561.92" y="767" width="29.16" height="4" fill="rgb(30,155,138)"/>
<rect x="615.92" y="767" width="33.16" height="4" fill="rgb(30,155,138)"/>
<rect x="958.92" y="767" width="29.16" height="4" fill="rgb(30,155,138)"/>
<rect x="1061.92" y="767" width="24.16" height="4" fill="rgb(30,155,138)"/>
<rect x="1100.92" y="767" width="24.16" height="4" fill="rgb(30,155,138)"/>
<rect x="1159.92" y="767" width="34.16" height="4" fill="rgb(30,155,138)"/>
<rect x="1248.92" y="767" width="23.16" height="4" fill="rgb(30,155,138)"/>
<rect x="1424.92" y="767" width="87.16" height="4" fill="rgb(30,155,138)"/>
<rect x="419.92" y="750" width="24.16" height="4" fill="rgb(37,133,142)"/>
<rect x="532.92" y="750" width="23.16" height="4" fill="rgb(37,133,142)"/>
<rect x="566.92" y="750" width="24.16" height="4" fill="rgb(37,133,142)"/>
<rect x="620.92" y="750" width="122.16" height="4" fill="rgb(37,133,142)"/>
<rect x="968.92" y="750" width="166.16" height="4" fill="rgb(37,133,142)"/>
<rect x="1184.92" y="750" width="161.16" height="4" fill="rgb(37,133,142)"/>
<rect x="1468.92" y="750" width="24.16" height="4" fill="rgb(37,133,142)"/>
<rect x="429.92" y="734" width="23.16" height="4" fill="rgb(45,112,142)"/>
<rect x="576.92" y="734" width="156.16" height="4" fill="rgb(45,112,142)"/>
<rect x="993.92" y="734" width="111.16" height="4" fill="rgb(45,112,142)"/>
<rect x="1115.92" y="734" width="107.16" height="4" fill="rgb(45,112,142)"/>
<rect x="1262.92" y="734" width="29.16" height="4" fill="rgb(45,112,142)"/>
<rect x="1488.92" y="734" width="23.16" height="4" fill="rgb(45,112,142)"/>
<rect x="591.92" y="718" width="23.16" height="4" fill="rgb(56,88,140)"/>
<rect x="654.92" y="718" width="117.16" height="4" fill="rgb(56,88,140)"/>
<rect x="1071.92" y="718" width="171.16" height="4" fill="rgb(56,88,140)"/>
<rect x="1262.92" y="718" width="24.16" height="4" fill="rgb(56,88,140)"/>
<rect x="595.92" y="701" width="137.16" height="4" fill="rgb(67,62,133)"/>
<rect x="1091.92" y="701" width="28.16" height="4" fill="rgb(67,62,133)"/>
<rect x="1199.92" y="701" width="23.16" height="4" fill="rgb(67,62,133)"/>
<rect x="1272.92" y="701" width="53.16" height="4" fill="rgb(67,62,133)"/>
<rect x="1110.92" y="685" width="24.16" height="4" fill="rgb(72,33,115)"/>
<g stroke="#fff" stroke-opacity="0.41" stroke-width="2.08" stroke-dasharray="2.08 3.44" fill="none">
<path d="M75 641.5 V842.5"/>
<path d="M219 641.5 V842.5"/>
<path d="M365 641.5 V842.5"/>
<path d="M506 641.5 V842.5"/>
<path d="M651 641.5 V842.5"/>
<path d="M797 641.5 V842.5"/>
<path d="M940 641.5 V842.5"/>
<path d="M1091 641.5 V842.5"/>
<path d="M1239 641.5 V842.5"/>
<path d="M1394 641.5 V842.5"/>
<path d="M1548 641.5 V842.5"/>
<path d="M1687 641.5 V842.5"/>
</g>
<path d="M1032.5 842.5 V641.5" stroke="#ff0000" stroke-width="1.6" stroke-dasharray="5.14 2.22" fill="none"/>
<text x="118.09" y="832" class="lb" textLength="19.99" lengthAdjust="spacingAndGlyphs">KSE</text>
<text x="255.35" y="832" class="lb" textLength="19.23" lengthAdjust="spacingAndGlyphs">ETA</text>
<text x="495.55" y="832" class="lb" textLength="22.17" lengthAdjust="spacingAndGlyphs">NZC</text>
<text x="711.25" y="832" class="lb" textLength="22.72" lengthAdjust="spacingAndGlyphs">NDA</text>
<text x="853.41" y="832" class="lb" textLength="19.44" lengthAdjust="spacingAndGlyphs">SPE</text>
<text x="946.55" y="832" class="lb" textLength="22.35" lengthAdjust="spacingAndGlyphs">ARD</text>
<text x="1024.98" y="832" class="lb" textLength="21.2" lengthAdjust="spacingAndGlyphs">EGE</text>
<text x="1142.63" y="832" class="lb" textLength="20.44" lengthAdjust="spacingAndGlyphs">NTA</text>
<text x="1284.79" y="832" class="lb" textLength="24.94" lengthAdjust="spacingAndGlyphs">MON</text>
<text x="1343.62" y="832" class="lb" textLength="21.44" lengthAdjust="spacingAndGlyphs">URS</text>
<text x="1412.25" y="832" class="lb" textLength="21.29" lengthAdjust="spacingAndGlyphs">AHY</text>
<text x="1485.78" y="832" class="lb" textLength="24.64" lengthAdjust="spacingAndGlyphs">GUM</text>
<text x="1534.8" y="832" class="lb" textLength="22.36" lengthAdjust="spacingAndGlyphs">OHY</text>
<text x="1735.78" y="832" class="lb" textLength="21.52" lengthAdjust="spacingAndGlyphs">XHE</text>
<text x="1770.1" y="832" class="lb" textLength="16.75" lengthAdjust="spacingAndGlyphs">EVI</text>
<text x="176.92" y="815" class="lb" textLength="20.7" lengthAdjust="spacingAndGlyphs">AVB</text>
<text x="255.35" y="815" class="lb" textLength="17.34" lengthAdjust="spacingAndGlyphs">ELY</text>
<text x="323.98" y="815" class="lb" textLength="23.35" lengthAdjust="spacingAndGlyphs">CAM</text>
<text x="431.83" y="815" class="lb" textLength="21.26" lengthAdjust="spacingAndGlyphs">SSG</text>
<text x="578.89" y="815" class="lb" textLength="20.65" lengthAdjust="spacingAndGlyphs">PCA</text>
<text x="721.05" y="815" class="lb" textLength="22.73" lengthAdjust="spacingAndGlyphs">AUD</text>
<text x="809.29" y="815" class="lb" textLength="21.95" lengthAdjust="spacingAndGlyphs">AUR</text>
<text x="931.84" y="815" class="lb" textLength="21.73" lengthAdjust="spacingAndGlyphs">DSX</text>
<text x="1010.27" y="815" class="lb" textLength="23.06" lengthAdjust="spacingAndGlyphs">OCU</text>
<text x="1137.73" y="815" class="lb" textLength="21.98" lengthAdjust="spacingAndGlyphs">OER</text>
<text x="1255.38" y="815" class="lb" textLength="22.84" lengthAdjust="spacingAndGlyphs">DKD</text>
<text x="1304.4" y="815" class="lb" textLength="21.72" lengthAdjust="spacingAndGlyphs">DSV</text>
<text x="1353.42" y="815" class="lb" textLength="17.88" lengthAdjust="spacingAndGlyphs">ALY</text>
<text x="1407.34" y="815" class="lb" textLength="15.43" lengthAdjust="spacingAndGlyphs">JLE</text>
<text x="1471.07" y="815" class="lb" textLength="21.13" lengthAdjust="spacingAndGlyphs">SCC</text>
<text x="1559.31" y="815" class="lb" textLength="19.67" lengthAdjust="spacingAndGlyphs">FEV</text>
<text x="176.92" y="799" class="lb" textLength="17.99" lengthAdjust="spacingAndGlyphs">LYR</text>
<text x="373" y="799" class="lb" textLength="19.3" lengthAdjust="spacingAndGlyphs">JMC</text>
<text x="559.28" y="799" class="lb" textLength="15.91" lengthAdjust="spacingAndGlyphs">JPE</text>
<text x="672.03" y="799" class="lb" textLength="20.33" lengthAdjust="spacingAndGlyphs">PAU</text>
<text x="774.97" y="799" class="lb" textLength="17.96" lengthAdjust="spacingAndGlyphs">NIA</text>
<text x="1049.49" y="799" class="lb" textLength="19.26" lengthAdjust="spacingAndGlyphs">STA</text>
<text x="1206.36" y="799" class="lb" textLength="24.15" lengthAdjust="spacingAndGlyphs">NOO</text>
<text x="1353.42" y="799" class="lb" textLength="24.42" lengthAdjust="spacingAndGlyphs">COM</text>
<text x="1471.07" y="799" class="lb" textLength="22.3" lengthAdjust="spacingAndGlyphs">NCC</text>
<text x="1564.21" y="799" class="lb" textLength="20.56" lengthAdjust="spacingAndGlyphs">FED</text>
<text x="206.33" y="783" class="lb" textLength="18" lengthAdjust="spacingAndGlyphs">HVI</text>
<text x="412.22" y="783" class="lb" textLength="17.41" lengthAdjust="spacingAndGlyphs">ARI</text>
<text x="529.87" y="783" class="lb" textLength="20.99" lengthAdjust="spacingAndGlyphs">SZC</text>
<text x="618.11" y="783" class="lb" textLength="20.65" lengthAdjust="spacingAndGlyphs">CAP</text>
<text x="819.09" y="783" class="lb" textLength="21.96" lengthAdjust="spacingAndGlyphs">NUE</text>
<text x="961.25" y="783" class="lb" textLength="21.8" lengthAdjust="spacingAndGlyphs">OCT</text>
<text x="1059.3" y="783" class="lb" textLength="18.48" lengthAdjust="spacingAndGlyphs">ORI</text>
<text x="1186.75" y="783" class="lb" textLength="24.27" lengthAdjust="spacingAndGlyphs">AMO</text>
<text x="1255.38" y="783" class="lb" textLength="21.54" lengthAdjust="spacingAndGlyphs">DPC</text>
<text x="1328.91" y="783" class="lb" textLength="17.31" lengthAdjust="spacingAndGlyphs">XVI</text>
<text x="1407.34" y="783" class="lb" textLength="22.91" lengthAdjust="spacingAndGlyphs">QUA</text>
<text x="1559.31" y="783" class="lb" textLength="22.3" lengthAdjust="spacingAndGlyphs">AAN</text>
<text x="353.39" y="766" class="lb" textLength="20.48" lengthAdjust="spacingAndGlyphs">TAH</text>
<text x="431.83" y="766" class="lb" textLength="16.75" lengthAdjust="spacingAndGlyphs">JEA</text>
<text x="480.85" y="766" class="lb" textLength="12.41" lengthAdjust="spacingAndGlyphs">JIP</text>
<text x="539.67" y="766" class="lb" textLength="19.14" lengthAdjust="spacingAndGlyphs">PPS</text>
<text x="578.89" y="766" class="lb" textLength="20.99" lengthAdjust="spacingAndGlyphs">ZCS</text>
<text x="632.81" y="766" class="lb" textLength="23.29" lengthAdjust="spacingAndGlyphs">GDR</text>
<text x="971.06" y="766" class="lb" textLength="21.93" lengthAdjust="spacingAndGlyphs">DRA</text>
<text x="1074" y="766" class="lb" textLength="21.86" lengthAdjust="spacingAndGlyphs">LUM</text>
<text x="1113.22" y="766" class="lb" textLength="21.11" lengthAdjust="spacingAndGlyphs">RPU</text>
<text x="1176.95" y="766" class="lb" textLength="21.29" lengthAdjust="spacingAndGlyphs">THA</text>
<text x="1260.28" y="766" class="lb" textLength="20.49" lengthAdjust="spacingAndGlyphs">PSU</text>
<text x="1471.07" y="766" class="lb" textLength="20.77" lengthAdjust="spacingAndGlyphs">XCB</text>
<text x="431.83" y="750" class="lb" textLength="17.04" lengthAdjust="spacingAndGlyphs">JRC</text>
<text x="544.57" y="750" class="lb" textLength="22.16" lengthAdjust="spacingAndGlyphs">CAN</text>
<text x="578.89" y="750" class="lb" textLength="19.92" lengthAdjust="spacingAndGlyphs">FAN</text>
<text x="681.83" y="750" class="lb" textLength="20.07" lengthAdjust="spacingAndGlyphs">PER</text>
<text x="1049.49" y="750" class="lb" textLength="19.92" lengthAdjust="spacingAndGlyphs">CTA</text>
<text x="1265.18" y="750" class="lb" textLength="22.18" lengthAdjust="spacingAndGlyphs">HYD</text>
<text x="1480.88" y="750" class="lb" textLength="23.71" lengthAdjust="spacingAndGlyphs">XUM</text>
<text x="441.63" y="733" class="lb" textLength="22.67" lengthAdjust="spacingAndGlyphs">COR</text>
<text x="657.32" y="733" class="lb" textLength="21.54" lengthAdjust="spacingAndGlyphs">SDA</text>
<text x="1049.49" y="733" class="lb" textLength="17.83" lengthAdjust="spacingAndGlyphs">LMI</text>
<text x="1167.14" y="733" class="lb" textLength="20.55" lengthAdjust="spacingAndGlyphs">LEO</text>
<text x="1274.99" y="733" class="lb" textLength="20.74" lengthAdjust="spacingAndGlyphs">EHY</text>
<text x="1500.48" y="733" class="lb" textLength="20.95" lengthAdjust="spacingAndGlyphs">ECV</text>
<text x="603.4" y="717" class="lb" textLength="17.31" lengthAdjust="spacingAndGlyphs">JXA</text>
<text x="716.15" y="717" class="lb" textLength="21.57" lengthAdjust="spacingAndGlyphs">KCG</text>
<text x="1157.34" y="717" class="lb" textLength="22.9" lengthAdjust="spacingAndGlyphs">AND</text>
<text x="1274.99" y="717" class="lb" textLength="22.95" lengthAdjust="spacingAndGlyphs">DAD</text>
<text x="667.13" y="701" class="lb" textLength="16.87" lengthAdjust="spacingAndGlyphs">ERI</text>
<text x="1108.32" y="701" class="lb" textLength="20.4" lengthAdjust="spacingAndGlyphs">SLD</text>
<text x="1211.26" y="701" class="lb" textLength="22.01" lengthAdjust="spacingAndGlyphs">ORS</text>
<text x="1299.5" y="701" class="lb" textLength="23.6" lengthAdjust="spacingAndGlyphs">GEM</text>
<text x="1123.02" y="684" class="lb" textLength="23.13" lengthAdjust="spacingAndGlyphs">KUM</text>
<path d="M114 834 h8 M118 830 v8 M241 834 h8 M245 830 v8 M511 834 h8 M515 830 v8 M707 834 h8 M711 830 v8 M834 834 h8 M838 830 v8 M962 834 h8 M966 830 v8 M987 834 h8 M991 830 v8 M1117 834 h8 M1121 830 v8 M1296 834 h8 M1300 830 v8 M1342 834 h8 M1346 830 v8 M1413 834 h8 M1417 830 v8 M1482 834 h8 M1486 830 v8 M1531 834 h8 M1535 830 v8 M1732 834 h8 M1736 830 v8 M1766 834 h8 M1770 830 v8 M173 818 h8 M177 814 v8 M256 818 h8 M260 814 v8 M324 818 h8 M328 814 v8 M438 818 h8 M442 814 v8 M599 818 h8 M603 814 v8 M717 818 h8 M721 814 v8 M794 818 h8 M798 814 v8 M940 818 h8 M944 814 v8 M1006 818 h8 M1010 814 v8 M1153 818 h8 M1157 814 v8 M1251 818 h8 M1255 814 v8 M1300 818 h8 M1304 814 v8 M1350 818 h8 M1354 814 v8 M1403 818 h8 M1407 814 v8 M1467 818 h8 M1471 814 v8 M1555 818 h8 M1559 814 v8 M175 802 h8 M179 798 v8 M379 802 h8 M383 798 v8 M545 802 h8 M549 798 v8 M683 802 h8 M687 798 v8 M742 802 h8 M746 798 v8 M1075 802 h8 M1079 798 v8 M1217 802 h8 M1221 798 v8 M1305 802 h8 M1309 798 v8 M1467 802 h8 M1471 798 v8 M1560 802 h8 M1564 798 v8 M202 785 h8 M206 781 v8 M401 785 h8 M405 781 v8 M526 785 h8 M530 781 v8 M639 785 h8 M643 781 v8 M815 785 h8 M819 781 v8 M960 785 h8 M964 781 v8 M1041 785 h8 M1045 781 v8 M1188 785 h8 M1192 781 v8 M1251 785 h8 M1255 781 v8 M1325 785 h8 M1329 781 v8 M1403 785 h8 M1407 781 v8 M1546 785 h8 M1550 781 v8 M356 769 h8 M360 765 v8 M427 769 h8 M431 765 v8 M477 769 h8 M481 765 v8 M536 769 h8 M540 765 v8 M571 769 h8 M575 765 v8 M631 769 h8 M635 765 v8 M974 769 h8 M978 765 v8 M1070 769 h8 M1074 765 v8 M1109 769 h8 M1113 765 v8 M1178 769 h8 M1182 765 v8 M1256 769 h8 M1260 765 v8 M1467 769 h8 M1471 765 v8 M428 752 h8 M432 748 v8 M540 752 h8 M544 748 v8 M575 752 h8 M579 748 v8 M704 752 h8 M708 748 v8 M1095 752 h8 M1099 748 v8 M1271 752 h8 M1275 748 v8 M1477 752 h8 M1481 748 v8 M438 736 h8 M442 732 v8 M631 736 h8 M635 732 v8 M1039 736 h8 M1043 732 v8 M1168 736 h8 M1172 732 v8 M1275 736 h8 M1279 732 v8 M1497 736 h8 M1501 732 v8 M599 720 h8 M603 716 v8 M727 720 h8 M731 716 v8 M1188 720 h8 M1192 716 v8 M1271 720 h8 M1275 716 v8 M688 703 h8 M692 699 v8 M1102 703 h8 M1106 699 v8 M1207 703 h8 M1211 699 v8 M1300 703 h8 M1304 699 v8 M1119 687 h8 M1123 683 v8" stroke="#fff" stroke-width="2" fill="none"/>
<rect x="20.5" y="641.5" width="1765" height="201" fill="none" stroke="#fff" stroke-width="1.1"/>
<path d="M20.5 842.5 v5.3 M265.5 842.5 v5.3 M510.5 842.5 v5.3 M755.5 842.5 v5.3 M1000.5 842.5 v5.3 M1246.5 842.5 v5.3 M1491.5 842.5 v5.3 M1736.5 842.5 v5.3" stroke="#fff" stroke-width="1.1" fill="none"/>
<text x="20.05" y="861.8" class="tk" textLength="8.84" lengthAdjust="spacingAndGlyphs">0</text>
<text x="265.15" y="861.8" class="tk" textLength="17.68" lengthAdjust="spacingAndGlyphs">50</text>
<text x="510.26" y="861.8" class="tk" textLength="26.51" lengthAdjust="spacingAndGlyphs">100</text>
<text x="755.36" y="861.8" class="tk" textLength="26.51" lengthAdjust="spacingAndGlyphs">150</text>
<text x="1000.47" y="861.8" class="tk" textLength="26.51" lengthAdjust="spacingAndGlyphs">200</text>
<text x="1245.57" y="861.8" class="tk" textLength="26.51" lengthAdjust="spacingAndGlyphs">250</text>
<text x="1490.68" y="861.8" class="tk" textLength="26.51" lengthAdjust="spacingAndGlyphs">300</text>
<text x="1735.78" y="861.8" class="tk" textLength="26.51" lengthAdjust="spacingAndGlyphs">350</text>
<text x="902" y="881.5" class="tk" textLength="146.69" lengthAdjust="spacingAndGlyphs">Solar longitude (deg)</text>
</g>
</g>
</svg>
</body>
</html>
